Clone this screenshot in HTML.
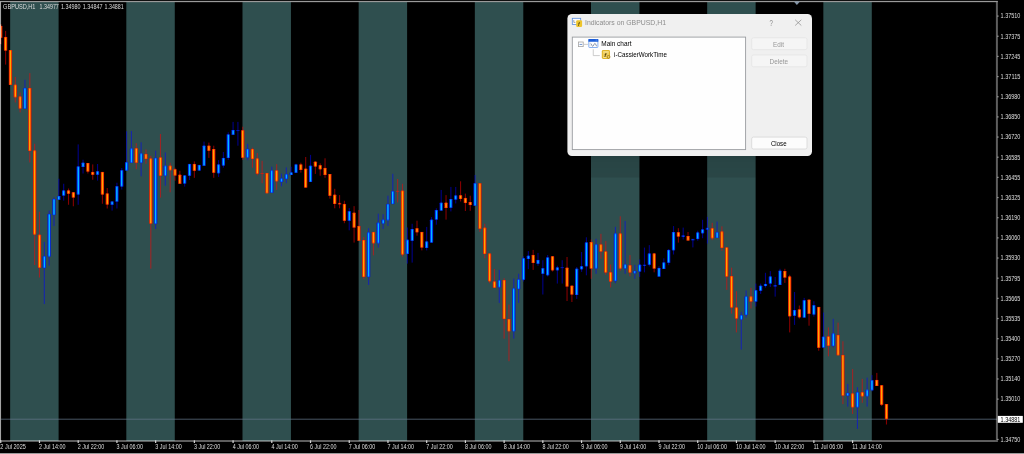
<!DOCTYPE html>
<html lang="en"><head><meta charset="utf-8"><title>GBPUSD,H1</title>
<style>html,body{margin:0;padding:0;background:#000;overflow:hidden}svg{display:block;will-change:transform}text{font-family:"Liberation Sans",sans-serif}</style></head><body>
<svg width="1024" height="454" viewBox="0 0 1024 454">
<defs>
<linearGradient id="go" x1="0" x2="1" y1="0" y2="0"><stop offset="0" stop-color="#d81000"/><stop offset="0.28" stop-color="#ff5000"/><stop offset="0.42" stop-color="#ffa800"/><stop offset="0.58" stop-color="#ffa800"/><stop offset="0.72" stop-color="#ff5000"/><stop offset="1" stop-color="#d81000"/></linearGradient>
<linearGradient id="gb" x1="0" x2="1" y1="0" y2="0"><stop offset="0" stop-color="#0010d0"/><stop offset="0.28" stop-color="#0050ff"/><stop offset="0.4" stop-color="#00bcff"/><stop offset="0.6" stop-color="#00bcff"/><stop offset="0.72" stop-color="#0050ff"/><stop offset="1" stop-color="#0010d0"/></linearGradient>
<linearGradient id="sh" x1="0" x2="0" y1="0" y2="1"><stop offset="0" stop-color="#000" stop-opacity="0.2"/><stop offset="0.25" stop-color="#000" stop-opacity="0.13"/><stop offset="0.93" stop-color="#000" stop-opacity="0.10"/><stop offset="1" stop-color="#000" stop-opacity="0"/></linearGradient>
</defs>
<rect width="1024" height="454" fill="#000"/>
<rect x="10.15" y="2" width="48.45" height="439" fill="#2f4f4f"/>
<rect x="126.32" y="2" width="48.45" height="439" fill="#2f4f4f"/>
<rect x="242.49" y="2" width="48.45" height="439" fill="#2f4f4f"/>
<rect x="358.66" y="2" width="48.45" height="439" fill="#2f4f4f"/>
<rect x="474.83" y="2" width="48.45" height="439" fill="#2f4f4f"/>
<rect x="591.00" y="2" width="48.45" height="439" fill="#2f4f4f"/>
<rect x="707.17" y="2" width="48.45" height="439" fill="#2f4f4f"/>
<rect x="823.34" y="2" width="48.45" height="439" fill="#2f4f4f"/>
<rect x="1" y="418.65" width="996" height="1.15" fill="#66788a" opacity="0.62"/>
<rect x="0.21" y="24.00" width="1.1" height="20.60" fill="#ff0000" opacity="0.52"/>
<rect x="-0.89" y="25.90" width="3.3" height="11.90" rx="0.5" fill="url(#go)"/>
<rect x="-0.74" y="25.90" width="3.0" height="0.6" fill="#f01800" opacity="0.7"/>
<rect x="-0.74" y="37.20" width="3.0" height="0.6" fill="#f01800" opacity="0.7"/>
<rect x="5.05" y="30.90" width="1.1" height="33.70" fill="#ff0000" opacity="0.52"/>
<rect x="3.95" y="36.90" width="3.3" height="13.70" rx="0.5" fill="url(#go)"/>
<rect x="4.10" y="36.90" width="3.0" height="0.6" fill="#f01800" opacity="0.7"/>
<rect x="4.10" y="50.00" width="3.0" height="0.6" fill="#f01800" opacity="0.7"/>
<rect x="9.89" y="50.00" width="1.1" height="35.00" fill="#ff0000" opacity="0.52"/>
<rect x="8.79" y="50.00" width="3.3" height="35.00" rx="0.5" fill="url(#go)"/>
<rect x="8.94" y="50.00" width="3.0" height="0.6" fill="#f01800" opacity="0.7"/>
<rect x="8.94" y="84.40" width="3.0" height="0.6" fill="#f01800" opacity="0.7"/>
<rect x="14.73" y="76.90" width="1.1" height="25.60" fill="#ff0000" opacity="0.52"/>
<rect x="13.63" y="84.75" width="3.3" height="12.50" rx="0.5" fill="url(#go)"/>
<rect x="13.78" y="84.75" width="3.0" height="0.6" fill="#f01800" opacity="0.7"/>
<rect x="13.78" y="96.65" width="3.0" height="0.6" fill="#f01800" opacity="0.7"/>
<rect x="19.57" y="92.50" width="1.1" height="19.90" fill="#ff0000" opacity="0.52"/>
<rect x="18.47" y="96.60" width="3.3" height="11.90" rx="0.5" fill="url(#go)"/>
<rect x="18.62" y="96.60" width="3.0" height="0.6" fill="#f01800" opacity="0.7"/>
<rect x="18.62" y="107.90" width="3.0" height="0.6" fill="#f01800" opacity="0.7"/>
<rect x="24.41" y="79.75" width="1.1" height="29.00" fill="#0000ff" opacity="0.52"/>
<rect x="23.31" y="88.10" width="3.3" height="20.65" rx="0.5" fill="url(#gb)"/>
<rect x="23.46" y="88.10" width="3.0" height="0.6" fill="#0020f0" opacity="0.7"/>
<rect x="23.46" y="108.15" width="3.0" height="0.6" fill="#0020f0" opacity="0.7"/>
<rect x="29.25" y="73.10" width="1.1" height="89.40" fill="#ff0000" opacity="0.52"/>
<rect x="28.15" y="88.10" width="3.3" height="62.90" rx="0.5" fill="url(#go)"/>
<rect x="28.30" y="88.10" width="3.0" height="0.6" fill="#f01800" opacity="0.7"/>
<rect x="28.30" y="150.40" width="3.0" height="0.6" fill="#f01800" opacity="0.7"/>
<rect x="34.09" y="143.75" width="1.1" height="121.25" fill="#ff0000" opacity="0.52"/>
<rect x="32.99" y="150.60" width="3.3" height="83.80" rx="0.5" fill="url(#go)"/>
<rect x="33.14" y="150.60" width="3.0" height="0.6" fill="#f01800" opacity="0.7"/>
<rect x="33.14" y="233.80" width="3.0" height="0.6" fill="#f01800" opacity="0.7"/>
<rect x="38.93" y="211.70" width="1.1" height="65.80" fill="#ff0000" opacity="0.52"/>
<rect x="37.83" y="234.75" width="3.3" height="33.00" rx="0.5" fill="url(#go)"/>
<rect x="37.98" y="234.75" width="3.0" height="0.6" fill="#f01800" opacity="0.7"/>
<rect x="37.98" y="267.15" width="3.0" height="0.6" fill="#f01800" opacity="0.7"/>
<rect x="43.77" y="241.90" width="1.1" height="62.10" fill="#0000ff" opacity="0.52"/>
<rect x="42.67" y="256.25" width="3.3" height="11.85" rx="0.5" fill="url(#gb)"/>
<rect x="42.82" y="256.25" width="3.0" height="0.6" fill="#0020f0" opacity="0.7"/>
<rect x="42.82" y="267.50" width="3.0" height="0.6" fill="#0020f0" opacity="0.7"/>
<rect x="48.61" y="210.60" width="1.1" height="55.00" fill="#0000ff" opacity="0.52"/>
<rect x="47.51" y="214.00" width="3.3" height="42.40" rx="0.5" fill="url(#gb)"/>
<rect x="47.66" y="214.00" width="3.0" height="0.6" fill="#0020f0" opacity="0.7"/>
<rect x="47.66" y="255.80" width="3.0" height="0.6" fill="#0020f0" opacity="0.7"/>
<rect x="53.45" y="197.25" width="1.1" height="28.75" fill="#0000ff" opacity="0.52"/>
<rect x="52.35" y="199.00" width="3.3" height="16.10" rx="0.5" fill="url(#gb)"/>
<rect x="52.50" y="199.00" width="3.0" height="0.6" fill="#0020f0" opacity="0.7"/>
<rect x="52.50" y="214.50" width="3.0" height="0.6" fill="#0020f0" opacity="0.7"/>
<rect x="58.29" y="178.75" width="1.1" height="21.00" fill="#0000ff" opacity="0.52"/>
<rect x="57.19" y="196.00" width="3.3" height="3.75" rx="0.5" fill="url(#gb)"/>
<rect x="57.34" y="196.00" width="3.0" height="0.6" fill="#0020f0" opacity="0.7"/>
<rect x="57.34" y="199.15" width="3.0" height="0.6" fill="#0020f0" opacity="0.7"/>
<rect x="63.13" y="183.75" width="1.1" height="16.85" fill="#0000ff" opacity="0.52"/>
<rect x="62.03" y="190.60" width="3.3" height="5.00" rx="0.5" fill="url(#gb)"/>
<rect x="62.18" y="190.60" width="3.0" height="0.6" fill="#0020f0" opacity="0.7"/>
<rect x="62.18" y="195.00" width="3.0" height="0.6" fill="#0020f0" opacity="0.7"/>
<rect x="67.97" y="188.50" width="1.1" height="16.25" fill="#ff0000" opacity="0.52"/>
<rect x="66.87" y="190.60" width="3.3" height="3.15" rx="0.5" fill="url(#go)"/>
<rect x="67.02" y="190.60" width="3.0" height="0.6" fill="#f01800" opacity="0.7"/>
<rect x="67.02" y="193.15" width="3.0" height="0.6" fill="#f01800" opacity="0.7"/>
<rect x="72.81" y="192.00" width="1.1" height="14.25" fill="#ff0000" opacity="0.52"/>
<rect x="71.71" y="192.25" width="3.3" height="5.25" rx="0.5" fill="url(#go)"/>
<rect x="71.86" y="192.25" width="3.0" height="0.6" fill="#f01800" opacity="0.7"/>
<rect x="71.86" y="196.90" width="3.0" height="0.6" fill="#f01800" opacity="0.7"/>
<rect x="77.65" y="144.40" width="1.1" height="60.35" fill="#0000ff" opacity="0.52"/>
<rect x="76.55" y="166.50" width="3.3" height="27.90" rx="0.5" fill="url(#gb)"/>
<rect x="76.70" y="166.50" width="3.0" height="0.6" fill="#0020f0" opacity="0.7"/>
<rect x="76.70" y="193.80" width="3.0" height="0.6" fill="#0020f0" opacity="0.7"/>
<rect x="82.49" y="159.75" width="1.1" height="13.75" fill="#0000ff" opacity="0.52"/>
<rect x="81.39" y="162.75" width="3.3" height="4.15" rx="0.5" fill="url(#gb)"/>
<rect x="81.54" y="162.75" width="3.0" height="0.6" fill="#0020f0" opacity="0.7"/>
<rect x="81.54" y="166.30" width="3.0" height="0.6" fill="#0020f0" opacity="0.7"/>
<rect x="87.33" y="163.00" width="1.1" height="10.50" fill="#ff0000" opacity="0.52"/>
<rect x="86.23" y="163.00" width="3.3" height="8.50" rx="0.5" fill="url(#go)"/>
<rect x="86.38" y="163.00" width="3.0" height="0.6" fill="#f01800" opacity="0.7"/>
<rect x="86.38" y="170.90" width="3.0" height="0.6" fill="#f01800" opacity="0.7"/>
<rect x="92.17" y="164.40" width="1.1" height="15.35" fill="#ff0000" opacity="0.52"/>
<rect x="91.07" y="171.90" width="3.3" height="2.85" rx="0.5" fill="url(#go)"/>
<rect x="91.22" y="171.90" width="3.0" height="0.6" fill="#f01800" opacity="0.7"/>
<rect x="91.22" y="174.15" width="3.0" height="0.6" fill="#f01800" opacity="0.7"/>
<rect x="97.01" y="164.00" width="1.1" height="16.60" fill="#0000ff" opacity="0.52"/>
<rect x="95.91" y="171.25" width="3.3" height="3.50" rx="0.5" fill="url(#gb)"/>
<rect x="96.06" y="171.25" width="3.0" height="0.6" fill="#0020f0" opacity="0.7"/>
<rect x="96.06" y="174.15" width="3.0" height="0.6" fill="#0020f0" opacity="0.7"/>
<rect x="101.85" y="171.90" width="1.1" height="31.85" fill="#ff0000" opacity="0.52"/>
<rect x="100.75" y="171.90" width="3.3" height="22.50" rx="0.5" fill="url(#go)"/>
<rect x="100.90" y="171.90" width="3.0" height="0.6" fill="#f01800" opacity="0.7"/>
<rect x="100.90" y="193.80" width="3.0" height="0.6" fill="#f01800" opacity="0.7"/>
<rect x="106.69" y="188.00" width="1.1" height="20.50" fill="#ff0000" opacity="0.52"/>
<rect x="105.59" y="193.50" width="3.3" height="10.90" rx="0.5" fill="url(#go)"/>
<rect x="105.74" y="193.50" width="3.0" height="0.6" fill="#f01800" opacity="0.7"/>
<rect x="105.74" y="203.80" width="3.0" height="0.6" fill="#f01800" opacity="0.7"/>
<rect x="111.53" y="201.60" width="1.1" height="9.00" fill="#0000ff" opacity="0.52"/>
<rect x="110.43" y="201.60" width="3.3" height="3.15" rx="0.5" fill="url(#gb)"/>
<rect x="110.58" y="201.60" width="3.0" height="0.6" fill="#0020f0" opacity="0.7"/>
<rect x="110.58" y="204.15" width="3.0" height="0.6" fill="#0020f0" opacity="0.7"/>
<rect x="116.37" y="182.75" width="1.1" height="25.75" fill="#0000ff" opacity="0.52"/>
<rect x="115.27" y="186.25" width="3.3" height="15.35" rx="0.5" fill="url(#gb)"/>
<rect x="115.42" y="186.25" width="3.0" height="0.6" fill="#0020f0" opacity="0.7"/>
<rect x="115.42" y="201.00" width="3.0" height="0.6" fill="#0020f0" opacity="0.7"/>
<rect x="121.21" y="168.00" width="1.1" height="21.50" fill="#0000ff" opacity="0.52"/>
<rect x="120.11" y="170.25" width="3.3" height="16.15" rx="0.5" fill="url(#gb)"/>
<rect x="120.26" y="170.25" width="3.0" height="0.6" fill="#0020f0" opacity="0.7"/>
<rect x="120.26" y="185.80" width="3.0" height="0.6" fill="#0020f0" opacity="0.7"/>
<rect x="126.05" y="131.30" width="1.1" height="39.10" fill="#0000ff" opacity="0.52"/>
<rect x="124.95" y="162.20" width="3.3" height="8.20" rx="0.5" fill="url(#gb)"/>
<rect x="125.10" y="162.20" width="3.0" height="0.6" fill="#0020f0" opacity="0.7"/>
<rect x="125.10" y="169.80" width="3.0" height="0.6" fill="#0020f0" opacity="0.7"/>
<rect x="130.89" y="131.00" width="1.1" height="31.70" fill="#0000ff" opacity="0.52"/>
<rect x="129.79" y="148.60" width="3.3" height="14.10" rx="0.5" fill="url(#gb)"/>
<rect x="129.94" y="148.60" width="3.0" height="0.6" fill="#0020f0" opacity="0.7"/>
<rect x="129.94" y="162.10" width="3.0" height="0.6" fill="#0020f0" opacity="0.7"/>
<rect x="135.73" y="143.20" width="1.1" height="26.00" fill="#ff0000" opacity="0.52"/>
<rect x="134.63" y="148.20" width="3.3" height="14.50" rx="0.5" fill="url(#go)"/>
<rect x="134.78" y="148.20" width="3.0" height="0.6" fill="#f01800" opacity="0.7"/>
<rect x="134.78" y="162.10" width="3.0" height="0.6" fill="#f01800" opacity="0.7"/>
<rect x="140.57" y="142.30" width="1.1" height="34.00" fill="#0000ff" opacity="0.52"/>
<rect x="139.47" y="153.60" width="3.3" height="9.10" rx="0.5" fill="url(#gb)"/>
<rect x="139.62" y="153.60" width="3.0" height="0.6" fill="#0020f0" opacity="0.7"/>
<rect x="139.62" y="162.10" width="3.0" height="0.6" fill="#0020f0" opacity="0.7"/>
<rect x="145.41" y="149.50" width="1.1" height="14.20" fill="#ff0000" opacity="0.52"/>
<rect x="144.31" y="153.90" width="3.3" height="5.20" rx="0.5" fill="url(#go)"/>
<rect x="144.46" y="153.90" width="3.0" height="0.6" fill="#f01800" opacity="0.7"/>
<rect x="144.46" y="158.50" width="3.0" height="0.6" fill="#f01800" opacity="0.7"/>
<rect x="150.25" y="155.80" width="1.1" height="112.90" fill="#ff0000" opacity="0.52"/>
<rect x="149.15" y="158.60" width="3.3" height="65.00" rx="0.5" fill="url(#go)"/>
<rect x="149.30" y="158.60" width="3.0" height="0.6" fill="#f01800" opacity="0.7"/>
<rect x="149.30" y="223.00" width="3.0" height="0.6" fill="#f01800" opacity="0.7"/>
<rect x="155.09" y="150.70" width="1.1" height="78.30" fill="#0000ff" opacity="0.52"/>
<rect x="153.99" y="157.90" width="3.3" height="65.90" rx="0.5" fill="url(#gb)"/>
<rect x="154.14" y="157.90" width="3.0" height="0.6" fill="#0020f0" opacity="0.7"/>
<rect x="154.14" y="223.20" width="3.0" height="0.6" fill="#0020f0" opacity="0.7"/>
<rect x="159.93" y="134.00" width="1.1" height="63.60" fill="#ff0000" opacity="0.52"/>
<rect x="158.83" y="157.40" width="3.3" height="18.30" rx="0.5" fill="url(#go)"/>
<rect x="158.98" y="157.40" width="3.0" height="0.6" fill="#f01800" opacity="0.7"/>
<rect x="158.98" y="175.10" width="3.0" height="0.6" fill="#f01800" opacity="0.7"/>
<rect x="164.77" y="152.40" width="1.1" height="33.30" fill="#0000ff" opacity="0.52"/>
<rect x="163.67" y="165.80" width="3.3" height="10.00" rx="0.5" fill="url(#gb)"/>
<rect x="163.82" y="165.80" width="3.0" height="0.6" fill="#0020f0" opacity="0.7"/>
<rect x="163.82" y="175.20" width="3.0" height="0.6" fill="#0020f0" opacity="0.7"/>
<rect x="169.61" y="162.70" width="1.1" height="29.60" fill="#ff0000" opacity="0.52"/>
<rect x="168.51" y="165.80" width="3.3" height="4.40" rx="0.5" fill="url(#go)"/>
<rect x="168.66" y="165.80" width="3.0" height="0.6" fill="#f01800" opacity="0.7"/>
<rect x="168.66" y="169.60" width="3.0" height="0.6" fill="#f01800" opacity="0.7"/>
<rect x="174.45" y="167.70" width="1.1" height="13.00" fill="#ff0000" opacity="0.52"/>
<rect x="173.35" y="169.20" width="3.3" height="6.20" rx="0.5" fill="url(#go)"/>
<rect x="173.50" y="169.20" width="3.0" height="0.6" fill="#f01800" opacity="0.7"/>
<rect x="173.50" y="174.80" width="3.0" height="0.6" fill="#f01800" opacity="0.7"/>
<rect x="179.29" y="170.80" width="1.1" height="13.00" fill="#ff0000" opacity="0.52"/>
<rect x="178.19" y="174.80" width="3.3" height="9.00" rx="0.5" fill="url(#go)"/>
<rect x="178.34" y="174.80" width="3.0" height="0.6" fill="#f01800" opacity="0.7"/>
<rect x="178.34" y="183.20" width="3.0" height="0.6" fill="#f01800" opacity="0.7"/>
<rect x="184.13" y="175.20" width="1.1" height="11.40" fill="#0000ff" opacity="0.52"/>
<rect x="183.03" y="175.40" width="3.3" height="8.10" rx="0.5" fill="url(#gb)"/>
<rect x="183.18" y="175.40" width="3.0" height="0.6" fill="#0020f0" opacity="0.7"/>
<rect x="183.18" y="182.90" width="3.0" height="0.6" fill="#0020f0" opacity="0.7"/>
<rect x="188.97" y="163.90" width="1.1" height="16.10" fill="#0000ff" opacity="0.52"/>
<rect x="187.87" y="163.90" width="3.3" height="11.80" rx="0.5" fill="url(#gb)"/>
<rect x="188.02" y="163.90" width="3.0" height="0.6" fill="#0020f0" opacity="0.7"/>
<rect x="188.02" y="175.10" width="3.0" height="0.6" fill="#0020f0" opacity="0.7"/>
<rect x="193.81" y="161.40" width="1.1" height="16.40" fill="#ff0000" opacity="0.52"/>
<rect x="192.71" y="163.90" width="3.3" height="6.90" rx="0.5" fill="url(#go)"/>
<rect x="192.86" y="163.90" width="3.0" height="0.6" fill="#f01800" opacity="0.7"/>
<rect x="192.86" y="170.20" width="3.0" height="0.6" fill="#f01800" opacity="0.7"/>
<rect x="198.65" y="164.90" width="1.1" height="5.50" fill="#0000ff" opacity="0.52"/>
<rect x="197.55" y="164.90" width="3.3" height="5.50" rx="0.5" fill="url(#gb)"/>
<rect x="197.70" y="164.90" width="3.0" height="0.6" fill="#0020f0" opacity="0.7"/>
<rect x="197.70" y="169.80" width="3.0" height="0.6" fill="#0020f0" opacity="0.7"/>
<rect x="203.49" y="141.60" width="1.1" height="24.20" fill="#0000ff" opacity="0.52"/>
<rect x="202.39" y="145.70" width="3.3" height="20.10" rx="0.5" fill="url(#gb)"/>
<rect x="202.54" y="145.70" width="3.0" height="0.6" fill="#0020f0" opacity="0.7"/>
<rect x="202.54" y="165.20" width="3.0" height="0.6" fill="#0020f0" opacity="0.7"/>
<rect x="208.33" y="142.60" width="1.1" height="15.30" fill="#ff0000" opacity="0.52"/>
<rect x="207.23" y="145.70" width="3.3" height="5.00" rx="0.5" fill="url(#go)"/>
<rect x="207.38" y="145.70" width="3.0" height="0.6" fill="#f01800" opacity="0.7"/>
<rect x="207.38" y="150.10" width="3.0" height="0.6" fill="#f01800" opacity="0.7"/>
<rect x="213.17" y="145.70" width="1.1" height="32.10" fill="#ff0000" opacity="0.52"/>
<rect x="212.07" y="149.10" width="3.3" height="23.75" rx="0.5" fill="url(#go)"/>
<rect x="212.22" y="149.10" width="3.0" height="0.6" fill="#f01800" opacity="0.7"/>
<rect x="212.22" y="172.25" width="3.0" height="0.6" fill="#f01800" opacity="0.7"/>
<rect x="218.01" y="160.10" width="1.1" height="16.80" fill="#0000ff" opacity="0.52"/>
<rect x="216.91" y="164.50" width="3.3" height="8.70" rx="0.5" fill="url(#gb)"/>
<rect x="217.06" y="164.50" width="3.0" height="0.6" fill="#0020f0" opacity="0.7"/>
<rect x="217.06" y="172.60" width="3.0" height="0.6" fill="#0020f0" opacity="0.7"/>
<rect x="222.85" y="152.00" width="1.1" height="15.70" fill="#0000ff" opacity="0.52"/>
<rect x="221.75" y="157.90" width="3.3" height="7.50" rx="0.5" fill="url(#gb)"/>
<rect x="221.90" y="157.90" width="3.0" height="0.6" fill="#0020f0" opacity="0.7"/>
<rect x="221.90" y="164.80" width="3.0" height="0.6" fill="#0020f0" opacity="0.7"/>
<rect x="227.69" y="132.30" width="1.1" height="27.60" fill="#0000ff" opacity="0.52"/>
<rect x="226.59" y="134.40" width="3.3" height="23.50" rx="0.5" fill="url(#gb)"/>
<rect x="226.74" y="134.40" width="3.0" height="0.6" fill="#0020f0" opacity="0.7"/>
<rect x="226.74" y="157.30" width="3.0" height="0.6" fill="#0020f0" opacity="0.7"/>
<rect x="232.53" y="121.90" width="1.1" height="12.90" fill="#0000ff" opacity="0.52"/>
<rect x="231.43" y="130.00" width="3.3" height="4.80" rx="0.5" fill="url(#gb)"/>
<rect x="231.58" y="130.00" width="3.0" height="0.6" fill="#0020f0" opacity="0.7"/>
<rect x="231.58" y="134.20" width="3.0" height="0.6" fill="#0020f0" opacity="0.7"/>
<rect x="237.37" y="121.90" width="1.1" height="23.80" fill="#0000ff" opacity="0.52"/>
<rect x="236.27" y="130.15" width="3.3" height="0.9" fill="#0020f0" opacity="0.75"/>
<rect x="242.21" y="126.70" width="1.1" height="33.20" fill="#ff0000" opacity="0.52"/>
<rect x="241.11" y="130.20" width="3.3" height="27.55" rx="0.5" fill="url(#go)"/>
<rect x="241.26" y="130.20" width="3.0" height="0.6" fill="#f01800" opacity="0.7"/>
<rect x="241.26" y="157.15" width="3.0" height="0.6" fill="#f01800" opacity="0.7"/>
<rect x="247.05" y="143.80" width="1.1" height="16.40" fill="#0000ff" opacity="0.52"/>
<rect x="245.95" y="148.90" width="3.3" height="8.60" rx="0.5" fill="url(#gb)"/>
<rect x="246.10" y="148.90" width="3.0" height="0.6" fill="#0020f0" opacity="0.7"/>
<rect x="246.10" y="156.90" width="3.0" height="0.6" fill="#0020f0" opacity="0.7"/>
<rect x="251.89" y="147.60" width="1.1" height="20.10" fill="#ff0000" opacity="0.52"/>
<rect x="250.79" y="148.90" width="3.3" height="10.00" rx="0.5" fill="url(#go)"/>
<rect x="250.94" y="148.90" width="3.0" height="0.6" fill="#f01800" opacity="0.7"/>
<rect x="250.94" y="158.30" width="3.0" height="0.6" fill="#f01800" opacity="0.7"/>
<rect x="256.73" y="152.90" width="1.1" height="22.40" fill="#ff0000" opacity="0.52"/>
<rect x="255.63" y="158.60" width="3.3" height="15.15" rx="0.5" fill="url(#go)"/>
<rect x="255.78" y="158.60" width="3.0" height="0.6" fill="#f01800" opacity="0.7"/>
<rect x="255.78" y="173.15" width="3.0" height="0.6" fill="#f01800" opacity="0.7"/>
<rect x="261.57" y="160.80" width="1.1" height="22.40" fill="#ff0000" opacity="0.52"/>
<rect x="260.47" y="173.15" width="3.3" height="0.9" fill="#f01800" opacity="0.75"/>
<rect x="266.41" y="172.90" width="1.1" height="20.30" fill="#ff0000" opacity="0.52"/>
<rect x="265.31" y="173.00" width="3.3" height="20.20" rx="0.5" fill="url(#go)"/>
<rect x="265.46" y="173.00" width="3.0" height="0.6" fill="#f01800" opacity="0.7"/>
<rect x="265.46" y="192.60" width="3.0" height="0.6" fill="#f01800" opacity="0.7"/>
<rect x="271.25" y="166.70" width="1.1" height="26.10" fill="#0000ff" opacity="0.52"/>
<rect x="270.15" y="170.50" width="3.3" height="22.30" rx="0.5" fill="url(#gb)"/>
<rect x="270.30" y="170.50" width="3.0" height="0.6" fill="#0020f0" opacity="0.7"/>
<rect x="270.30" y="192.20" width="3.0" height="0.6" fill="#0020f0" opacity="0.7"/>
<rect x="276.09" y="164.20" width="1.1" height="25.60" fill="#ff0000" opacity="0.52"/>
<rect x="274.99" y="170.40" width="3.3" height="10.90" rx="0.5" fill="url(#go)"/>
<rect x="275.14" y="170.40" width="3.0" height="0.6" fill="#f01800" opacity="0.7"/>
<rect x="275.14" y="180.70" width="3.0" height="0.6" fill="#f01800" opacity="0.7"/>
<rect x="280.93" y="173.60" width="1.1" height="12.70" fill="#0000ff" opacity="0.52"/>
<rect x="279.83" y="178.50" width="3.3" height="3.40" rx="0.5" fill="url(#gb)"/>
<rect x="279.98" y="178.50" width="3.0" height="0.6" fill="#0020f0" opacity="0.7"/>
<rect x="279.98" y="181.30" width="3.0" height="0.6" fill="#0020f0" opacity="0.7"/>
<rect x="285.77" y="167.40" width="1.1" height="15.80" fill="#0000ff" opacity="0.52"/>
<rect x="284.67" y="174.30" width="3.3" height="4.70" rx="0.5" fill="url(#gb)"/>
<rect x="284.82" y="174.30" width="3.0" height="0.6" fill="#0020f0" opacity="0.7"/>
<rect x="284.82" y="178.40" width="3.0" height="0.6" fill="#0020f0" opacity="0.7"/>
<rect x="290.61" y="166.70" width="1.1" height="8.30" fill="#0000ff" opacity="0.52"/>
<rect x="289.51" y="172.50" width="3.3" height="2.50" rx="0.5" fill="url(#gb)"/>
<rect x="289.66" y="172.50" width="3.0" height="0.6" fill="#0020f0" opacity="0.7"/>
<rect x="289.66" y="174.40" width="3.0" height="0.6" fill="#0020f0" opacity="0.7"/>
<rect x="295.45" y="163.70" width="1.1" height="9.20" fill="#0000ff" opacity="0.52"/>
<rect x="294.35" y="164.50" width="3.3" height="8.35" rx="0.5" fill="url(#gb)"/>
<rect x="294.50" y="164.50" width="3.0" height="0.6" fill="#0020f0" opacity="0.7"/>
<rect x="294.50" y="172.25" width="3.0" height="0.6" fill="#0020f0" opacity="0.7"/>
<rect x="300.29" y="162.70" width="1.1" height="9.90" fill="#ff0000" opacity="0.52"/>
<rect x="299.19" y="164.50" width="3.3" height="5.40" rx="0.5" fill="url(#go)"/>
<rect x="299.34" y="164.50" width="3.0" height="0.6" fill="#f01800" opacity="0.7"/>
<rect x="299.34" y="169.30" width="3.0" height="0.6" fill="#f01800" opacity="0.7"/>
<rect x="305.13" y="157.00" width="1.1" height="30.60" fill="#ff0000" opacity="0.52"/>
<rect x="304.03" y="168.70" width="3.3" height="18.90" rx="0.5" fill="url(#go)"/>
<rect x="304.18" y="168.70" width="3.0" height="0.6" fill="#f01800" opacity="0.7"/>
<rect x="304.18" y="187.00" width="3.0" height="0.6" fill="#f01800" opacity="0.7"/>
<rect x="309.97" y="154.90" width="1.1" height="27.00" fill="#0000ff" opacity="0.52"/>
<rect x="308.87" y="165.80" width="3.3" height="16.10" rx="0.5" fill="url(#gb)"/>
<rect x="309.02" y="165.80" width="3.0" height="0.6" fill="#0020f0" opacity="0.7"/>
<rect x="309.02" y="181.30" width="3.0" height="0.6" fill="#0020f0" opacity="0.7"/>
<rect x="314.81" y="161.40" width="1.1" height="12.50" fill="#ff0000" opacity="0.52"/>
<rect x="313.71" y="161.70" width="3.3" height="4.70" rx="0.5" fill="url(#go)"/>
<rect x="313.86" y="161.70" width="3.0" height="0.6" fill="#f01800" opacity="0.7"/>
<rect x="313.86" y="165.80" width="3.0" height="0.6" fill="#f01800" opacity="0.7"/>
<rect x="319.65" y="163.30" width="1.1" height="12.40" fill="#ff0000" opacity="0.52"/>
<rect x="318.55" y="165.20" width="3.3" height="4.00" rx="0.5" fill="url(#go)"/>
<rect x="318.70" y="165.20" width="3.0" height="0.6" fill="#f01800" opacity="0.7"/>
<rect x="318.70" y="168.60" width="3.0" height="0.6" fill="#f01800" opacity="0.7"/>
<rect x="324.49" y="158.30" width="1.1" height="19.50" fill="#ff0000" opacity="0.52"/>
<rect x="323.39" y="167.90" width="3.3" height="7.00" rx="0.5" fill="url(#go)"/>
<rect x="323.54" y="167.90" width="3.0" height="0.6" fill="#f01800" opacity="0.7"/>
<rect x="323.54" y="174.30" width="3.0" height="0.6" fill="#f01800" opacity="0.7"/>
<rect x="329.33" y="174.10" width="1.1" height="24.50" fill="#ff0000" opacity="0.52"/>
<rect x="328.23" y="174.10" width="3.3" height="21.60" rx="0.5" fill="url(#go)"/>
<rect x="328.38" y="174.10" width="3.0" height="0.6" fill="#f01800" opacity="0.7"/>
<rect x="328.38" y="195.10" width="3.0" height="0.6" fill="#f01800" opacity="0.7"/>
<rect x="334.17" y="188.80" width="1.1" height="19.50" fill="#ff0000" opacity="0.52"/>
<rect x="333.07" y="194.80" width="3.3" height="9.10" rx="0.5" fill="url(#go)"/>
<rect x="333.22" y="194.80" width="3.0" height="0.6" fill="#f01800" opacity="0.7"/>
<rect x="333.22" y="203.30" width="3.0" height="0.6" fill="#f01800" opacity="0.7"/>
<rect x="339.01" y="195.10" width="1.1" height="13.20" fill="#ff0000" opacity="0.52"/>
<rect x="337.91" y="202.90" width="3.3" height="1.60" fill="#f01800" opacity="0.8"/>
<rect x="338.66" y="203.35" width="1.8" height="0.70" fill="url(#go)" opacity="0.8"/>
<rect x="343.85" y="200.75" width="1.1" height="22.45" fill="#ff0000" opacity="0.52"/>
<rect x="342.75" y="203.90" width="3.3" height="16.80" rx="0.5" fill="url(#go)"/>
<rect x="342.90" y="203.90" width="3.0" height="0.6" fill="#f01800" opacity="0.7"/>
<rect x="342.90" y="220.10" width="3.0" height="0.6" fill="#f01800" opacity="0.7"/>
<rect x="348.69" y="208.10" width="1.1" height="22.20" fill="#0000ff" opacity="0.52"/>
<rect x="347.59" y="211.20" width="3.3" height="9.50" rx="0.5" fill="url(#gb)"/>
<rect x="347.74" y="211.20" width="3.0" height="0.6" fill="#0020f0" opacity="0.7"/>
<rect x="347.74" y="220.10" width="3.0" height="0.6" fill="#0020f0" opacity="0.7"/>
<rect x="353.53" y="206.15" width="1.1" height="36.45" fill="#ff0000" opacity="0.52"/>
<rect x="352.43" y="212.80" width="3.3" height="14.70" rx="0.5" fill="url(#go)"/>
<rect x="352.58" y="212.80" width="3.0" height="0.6" fill="#f01800" opacity="0.7"/>
<rect x="352.58" y="226.90" width="3.0" height="0.6" fill="#f01800" opacity="0.7"/>
<rect x="358.37" y="210.00" width="1.1" height="30.70" fill="#ff0000" opacity="0.52"/>
<rect x="357.27" y="225.90" width="3.3" height="14.80" rx="0.5" fill="url(#go)"/>
<rect x="357.42" y="225.90" width="3.0" height="0.6" fill="#f01800" opacity="0.7"/>
<rect x="357.42" y="240.10" width="3.0" height="0.6" fill="#f01800" opacity="0.7"/>
<rect x="363.21" y="237.00" width="1.1" height="41.90" fill="#ff0000" opacity="0.52"/>
<rect x="362.11" y="240.10" width="3.3" height="36.90" rx="0.5" fill="url(#go)"/>
<rect x="362.26" y="240.10" width="3.0" height="0.6" fill="#f01800" opacity="0.7"/>
<rect x="362.26" y="276.40" width="3.0" height="0.6" fill="#f01800" opacity="0.7"/>
<rect x="368.05" y="228.20" width="1.1" height="56.70" fill="#0000ff" opacity="0.52"/>
<rect x="366.95" y="232.60" width="3.3" height="44.40" rx="0.5" fill="url(#gb)"/>
<rect x="367.10" y="232.60" width="3.0" height="0.6" fill="#0020f0" opacity="0.7"/>
<rect x="367.10" y="276.40" width="3.0" height="0.6" fill="#0020f0" opacity="0.7"/>
<rect x="372.89" y="231.90" width="1.1" height="23.45" fill="#ff0000" opacity="0.52"/>
<rect x="371.79" y="231.90" width="3.3" height="11.30" rx="0.5" fill="url(#go)"/>
<rect x="371.94" y="231.90" width="3.0" height="0.6" fill="#f01800" opacity="0.7"/>
<rect x="371.94" y="242.60" width="3.0" height="0.6" fill="#f01800" opacity="0.7"/>
<rect x="377.73" y="213.70" width="1.1" height="33.90" fill="#0000ff" opacity="0.52"/>
<rect x="376.63" y="222.80" width="3.3" height="20.40" rx="0.5" fill="url(#gb)"/>
<rect x="376.78" y="222.80" width="3.0" height="0.6" fill="#0020f0" opacity="0.7"/>
<rect x="376.78" y="242.60" width="3.0" height="0.6" fill="#0020f0" opacity="0.7"/>
<rect x="382.57" y="214.20" width="1.1" height="14.80" fill="#0000ff" opacity="0.52"/>
<rect x="381.47" y="219.70" width="3.3" height="3.80" rx="0.5" fill="url(#gb)"/>
<rect x="381.62" y="219.70" width="3.0" height="0.6" fill="#0020f0" opacity="0.7"/>
<rect x="381.62" y="222.90" width="3.0" height="0.6" fill="#0020f0" opacity="0.7"/>
<rect x="387.41" y="195.70" width="1.1" height="30.30" fill="#0000ff" opacity="0.52"/>
<rect x="386.31" y="204.10" width="3.3" height="16.05" rx="0.5" fill="url(#gb)"/>
<rect x="386.46" y="204.10" width="3.0" height="0.6" fill="#0020f0" opacity="0.7"/>
<rect x="386.46" y="219.55" width="3.0" height="0.6" fill="#0020f0" opacity="0.7"/>
<rect x="392.25" y="173.80" width="1.1" height="30.30" fill="#0000ff" opacity="0.52"/>
<rect x="391.15" y="191.30" width="3.3" height="12.80" rx="0.5" fill="url(#gb)"/>
<rect x="391.30" y="191.30" width="3.0" height="0.6" fill="#0020f0" opacity="0.7"/>
<rect x="391.30" y="203.50" width="3.0" height="0.6" fill="#0020f0" opacity="0.7"/>
<rect x="397.09" y="179.00" width="1.1" height="23.40" fill="#ff0000" opacity="0.52"/>
<rect x="395.99" y="190.85" width="3.3" height="0.9" fill="#f01800" opacity="0.75"/>
<rect x="401.93" y="183.80" width="1.1" height="72.80" fill="#ff0000" opacity="0.52"/>
<rect x="400.83" y="190.70" width="3.3" height="63.75" rx="0.5" fill="url(#go)"/>
<rect x="400.98" y="190.70" width="3.0" height="0.6" fill="#f01800" opacity="0.7"/>
<rect x="400.98" y="253.85" width="3.0" height="0.6" fill="#f01800" opacity="0.7"/>
<rect x="406.77" y="227.50" width="1.1" height="36.10" fill="#0000ff" opacity="0.52"/>
<rect x="405.67" y="239.80" width="3.3" height="14.20" rx="0.5" fill="url(#gb)"/>
<rect x="405.82" y="239.80" width="3.0" height="0.6" fill="#0020f0" opacity="0.7"/>
<rect x="405.82" y="253.40" width="3.0" height="0.6" fill="#0020f0" opacity="0.7"/>
<rect x="411.61" y="223.80" width="1.1" height="38.80" fill="#0000ff" opacity="0.52"/>
<rect x="410.51" y="229.00" width="3.3" height="11.70" rx="0.5" fill="url(#gb)"/>
<rect x="410.66" y="229.00" width="3.0" height="0.6" fill="#0020f0" opacity="0.7"/>
<rect x="410.66" y="240.10" width="3.0" height="0.6" fill="#0020f0" opacity="0.7"/>
<rect x="416.45" y="220.70" width="1.1" height="15.00" fill="#ff0000" opacity="0.52"/>
<rect x="415.35" y="228.20" width="3.3" height="4.10" rx="0.5" fill="url(#go)"/>
<rect x="415.50" y="228.20" width="3.0" height="0.6" fill="#f01800" opacity="0.7"/>
<rect x="415.50" y="231.70" width="3.0" height="0.6" fill="#f01800" opacity="0.7"/>
<rect x="421.29" y="231.90" width="1.1" height="18.50" fill="#ff0000" opacity="0.52"/>
<rect x="420.19" y="231.90" width="3.3" height="15.60" rx="0.5" fill="url(#go)"/>
<rect x="420.34" y="231.90" width="3.0" height="0.6" fill="#f01800" opacity="0.7"/>
<rect x="420.34" y="246.90" width="3.0" height="0.6" fill="#f01800" opacity="0.7"/>
<rect x="426.13" y="226.90" width="1.1" height="23.50" fill="#0000ff" opacity="0.52"/>
<rect x="425.03" y="241.60" width="3.3" height="6.30" rx="0.5" fill="url(#gb)"/>
<rect x="425.18" y="241.60" width="3.0" height="0.6" fill="#0020f0" opacity="0.7"/>
<rect x="425.18" y="247.30" width="3.0" height="0.6" fill="#0020f0" opacity="0.7"/>
<rect x="430.97" y="217.10" width="1.1" height="25.50" fill="#0000ff" opacity="0.52"/>
<rect x="429.87" y="219.75" width="3.3" height="22.85" rx="0.5" fill="url(#gb)"/>
<rect x="430.02" y="219.75" width="3.0" height="0.6" fill="#0020f0" opacity="0.7"/>
<rect x="430.02" y="242.00" width="3.0" height="0.6" fill="#0020f0" opacity="0.7"/>
<rect x="435.81" y="208.30" width="1.1" height="16.40" fill="#0000ff" opacity="0.52"/>
<rect x="434.71" y="210.00" width="3.3" height="9.60" rx="0.5" fill="url(#gb)"/>
<rect x="434.86" y="210.00" width="3.0" height="0.6" fill="#0020f0" opacity="0.7"/>
<rect x="434.86" y="219.00" width="3.0" height="0.6" fill="#0020f0" opacity="0.7"/>
<rect x="440.65" y="189.95" width="1.1" height="20.65" fill="#0000ff" opacity="0.52"/>
<rect x="439.55" y="202.75" width="3.3" height="7.85" rx="0.5" fill="url(#gb)"/>
<rect x="439.70" y="202.75" width="3.0" height="0.6" fill="#0020f0" opacity="0.7"/>
<rect x="439.70" y="210.00" width="3.0" height="0.6" fill="#0020f0" opacity="0.7"/>
<rect x="445.49" y="195.10" width="1.1" height="24.50" fill="#ff0000" opacity="0.52"/>
<rect x="444.39" y="202.75" width="3.3" height="5.15" rx="0.5" fill="url(#go)"/>
<rect x="444.54" y="202.75" width="3.0" height="0.6" fill="#f01800" opacity="0.7"/>
<rect x="444.54" y="207.30" width="3.0" height="0.6" fill="#f01800" opacity="0.7"/>
<rect x="450.33" y="186.95" width="1.1" height="24.45" fill="#0000ff" opacity="0.52"/>
<rect x="449.23" y="199.00" width="3.3" height="8.80" rx="0.5" fill="url(#gb)"/>
<rect x="449.38" y="199.00" width="3.0" height="0.6" fill="#0020f0" opacity="0.7"/>
<rect x="449.38" y="207.20" width="3.0" height="0.6" fill="#0020f0" opacity="0.7"/>
<rect x="455.17" y="186.95" width="1.1" height="16.50" fill="#0000ff" opacity="0.52"/>
<rect x="454.07" y="195.55" width="3.3" height="3.95" rx="0.5" fill="url(#gb)"/>
<rect x="454.22" y="195.55" width="3.0" height="0.6" fill="#0020f0" opacity="0.7"/>
<rect x="454.22" y="198.90" width="3.0" height="0.6" fill="#0020f0" opacity="0.7"/>
<rect x="460.01" y="181.30" width="1.1" height="20.20" fill="#ff0000" opacity="0.52"/>
<rect x="458.91" y="195.35" width="3.3" height="3.65" rx="0.5" fill="url(#go)"/>
<rect x="459.06" y="195.35" width="3.0" height="0.6" fill="#f01800" opacity="0.7"/>
<rect x="459.06" y="198.40" width="3.0" height="0.6" fill="#f01800" opacity="0.7"/>
<rect x="464.85" y="193.60" width="1.1" height="17.40" fill="#ff0000" opacity="0.52"/>
<rect x="463.75" y="197.90" width="3.3" height="5.15" rx="0.5" fill="url(#go)"/>
<rect x="463.90" y="197.90" width="3.0" height="0.6" fill="#f01800" opacity="0.7"/>
<rect x="463.90" y="202.45" width="3.0" height="0.6" fill="#f01800" opacity="0.7"/>
<rect x="469.69" y="195.70" width="1.1" height="15.10" fill="#ff0000" opacity="0.52"/>
<rect x="468.59" y="202.00" width="3.3" height="3.10" rx="0.5" fill="url(#go)"/>
<rect x="468.74" y="202.00" width="3.0" height="0.6" fill="#f01800" opacity="0.7"/>
<rect x="468.74" y="204.50" width="3.0" height="0.6" fill="#f01800" opacity="0.7"/>
<rect x="474.53" y="175.00" width="1.1" height="30.80" fill="#0000ff" opacity="0.52"/>
<rect x="473.43" y="183.20" width="3.3" height="22.60" rx="0.5" fill="url(#gb)"/>
<rect x="473.58" y="183.20" width="3.0" height="0.6" fill="#0020f0" opacity="0.7"/>
<rect x="473.58" y="205.20" width="3.0" height="0.6" fill="#0020f0" opacity="0.7"/>
<rect x="479.37" y="183.20" width="1.1" height="48.70" fill="#ff0000" opacity="0.52"/>
<rect x="478.27" y="183.20" width="3.3" height="45.60" rx="0.5" fill="url(#go)"/>
<rect x="478.42" y="183.20" width="3.0" height="0.6" fill="#f01800" opacity="0.7"/>
<rect x="478.42" y="228.20" width="3.0" height="0.6" fill="#f01800" opacity="0.7"/>
<rect x="484.21" y="223.75" width="1.1" height="34.55" fill="#ff0000" opacity="0.52"/>
<rect x="483.11" y="227.80" width="3.3" height="26.10" rx="0.5" fill="url(#go)"/>
<rect x="483.26" y="227.80" width="3.0" height="0.6" fill="#f01800" opacity="0.7"/>
<rect x="483.26" y="253.30" width="3.0" height="0.6" fill="#f01800" opacity="0.7"/>
<rect x="489.05" y="253.60" width="1.1" height="29.60" fill="#ff0000" opacity="0.52"/>
<rect x="487.95" y="253.60" width="3.3" height="27.70" rx="0.5" fill="url(#go)"/>
<rect x="488.10" y="253.60" width="3.0" height="0.6" fill="#f01800" opacity="0.7"/>
<rect x="488.10" y="280.70" width="3.0" height="0.6" fill="#f01800" opacity="0.7"/>
<rect x="493.89" y="268.90" width="1.1" height="18.90" fill="#ff0000" opacity="0.52"/>
<rect x="492.79" y="281.50" width="3.3" height="6.30" rx="0.5" fill="url(#go)"/>
<rect x="492.94" y="281.50" width="3.0" height="0.6" fill="#f01800" opacity="0.7"/>
<rect x="492.94" y="287.20" width="3.0" height="0.6" fill="#f01800" opacity="0.7"/>
<rect x="498.73" y="269.90" width="1.1" height="33.00" fill="#0000ff" opacity="0.52"/>
<rect x="497.63" y="280.30" width="3.3" height="7.00" rx="0.5" fill="url(#gb)"/>
<rect x="497.78" y="280.30" width="3.0" height="0.6" fill="#0020f0" opacity="0.7"/>
<rect x="497.78" y="286.70" width="3.0" height="0.6" fill="#0020f0" opacity="0.7"/>
<rect x="503.57" y="278.20" width="1.1" height="60.40" fill="#ff0000" opacity="0.52"/>
<rect x="502.47" y="280.00" width="3.3" height="39.10" rx="0.5" fill="url(#go)"/>
<rect x="502.62" y="280.00" width="3.0" height="0.6" fill="#f01800" opacity="0.7"/>
<rect x="502.62" y="318.50" width="3.0" height="0.6" fill="#f01800" opacity="0.7"/>
<rect x="508.41" y="304.50" width="1.1" height="56.70" fill="#ff0000" opacity="0.52"/>
<rect x="507.31" y="319.10" width="3.3" height="12.20" rx="0.5" fill="url(#go)"/>
<rect x="507.46" y="319.10" width="3.0" height="0.6" fill="#f01800" opacity="0.7"/>
<rect x="507.46" y="330.70" width="3.0" height="0.6" fill="#f01800" opacity="0.7"/>
<rect x="513.25" y="278.50" width="1.1" height="60.10" fill="#0000ff" opacity="0.52"/>
<rect x="512.15" y="288.60" width="3.3" height="42.70" rx="0.5" fill="url(#gb)"/>
<rect x="512.30" y="288.60" width="3.0" height="0.6" fill="#0020f0" opacity="0.7"/>
<rect x="512.30" y="330.70" width="3.0" height="0.6" fill="#0020f0" opacity="0.7"/>
<rect x="518.09" y="273.75" width="1.1" height="29.15" fill="#0000ff" opacity="0.52"/>
<rect x="516.99" y="279.40" width="3.3" height="9.70" rx="0.5" fill="url(#gb)"/>
<rect x="517.14" y="279.40" width="3.0" height="0.6" fill="#0020f0" opacity="0.7"/>
<rect x="517.14" y="288.50" width="3.0" height="0.6" fill="#0020f0" opacity="0.7"/>
<rect x="522.93" y="256.40" width="1.1" height="25.10" fill="#0000ff" opacity="0.52"/>
<rect x="521.83" y="258.30" width="3.3" height="21.50" rx="0.5" fill="url(#gb)"/>
<rect x="521.98" y="258.30" width="3.0" height="0.6" fill="#0020f0" opacity="0.7"/>
<rect x="521.98" y="279.20" width="3.0" height="0.6" fill="#0020f0" opacity="0.7"/>
<rect x="527.77" y="251.10" width="1.1" height="18.10" fill="#0000ff" opacity="0.52"/>
<rect x="526.67" y="255.80" width="3.3" height="3.10" rx="0.5" fill="url(#gb)"/>
<rect x="526.82" y="255.80" width="3.0" height="0.6" fill="#0020f0" opacity="0.7"/>
<rect x="526.82" y="258.30" width="3.0" height="0.6" fill="#0020f0" opacity="0.7"/>
<rect x="532.61" y="249.90" width="1.1" height="20.00" fill="#ff0000" opacity="0.52"/>
<rect x="531.51" y="254.90" width="3.3" height="8.00" rx="0.5" fill="url(#go)"/>
<rect x="531.66" y="254.90" width="3.0" height="0.6" fill="#f01800" opacity="0.7"/>
<rect x="531.66" y="262.30" width="3.0" height="0.6" fill="#f01800" opacity="0.7"/>
<rect x="537.45" y="252.90" width="1.1" height="12.90" fill="#0000ff" opacity="0.52"/>
<rect x="536.35" y="259.90" width="3.3" height="3.80" rx="0.5" fill="url(#gb)"/>
<rect x="536.50" y="259.90" width="3.0" height="0.6" fill="#0020f0" opacity="0.7"/>
<rect x="536.50" y="263.10" width="3.0" height="0.6" fill="#0020f0" opacity="0.7"/>
<rect x="542.29" y="260.20" width="1.1" height="34.30" fill="#0000ff" opacity="0.52"/>
<rect x="541.19" y="268.20" width="3.3" height="5.60" rx="0.5" fill="url(#gb)"/>
<rect x="541.34" y="268.20" width="3.0" height="0.6" fill="#0020f0" opacity="0.7"/>
<rect x="541.34" y="273.20" width="3.0" height="0.6" fill="#0020f0" opacity="0.7"/>
<rect x="547.13" y="255.00" width="1.1" height="21.50" fill="#0000ff" opacity="0.52"/>
<rect x="546.03" y="257.40" width="3.3" height="17.80" rx="0.5" fill="url(#gb)"/>
<rect x="546.18" y="257.40" width="3.0" height="0.6" fill="#0020f0" opacity="0.7"/>
<rect x="546.18" y="274.60" width="3.0" height="0.6" fill="#0020f0" opacity="0.7"/>
<rect x="551.97" y="256.20" width="1.1" height="15.30" fill="#ff0000" opacity="0.52"/>
<rect x="550.87" y="256.20" width="3.3" height="14.10" rx="0.5" fill="url(#go)"/>
<rect x="551.02" y="256.20" width="3.0" height="0.6" fill="#f01800" opacity="0.7"/>
<rect x="551.02" y="269.70" width="3.0" height="0.6" fill="#f01800" opacity="0.7"/>
<rect x="556.81" y="265.70" width="1.1" height="17.85" fill="#0000ff" opacity="0.52"/>
<rect x="555.71" y="267.45" width="3.3" height="2.80" rx="0.5" fill="url(#gb)"/>
<rect x="555.86" y="267.45" width="3.0" height="0.6" fill="#0020f0" opacity="0.7"/>
<rect x="555.86" y="269.65" width="3.0" height="0.6" fill="#0020f0" opacity="0.7"/>
<rect x="561.65" y="260.20" width="1.1" height="23.35" fill="#0000ff" opacity="0.52"/>
<rect x="560.55" y="267.20" width="3.3" height="0.9" fill="#0020f0" opacity="0.75"/>
<rect x="566.49" y="257.00" width="1.1" height="44.00" fill="#ff0000" opacity="0.52"/>
<rect x="565.39" y="267.75" width="3.3" height="18.70" rx="0.5" fill="url(#go)"/>
<rect x="565.54" y="267.75" width="3.0" height="0.6" fill="#f01800" opacity="0.7"/>
<rect x="565.54" y="285.85" width="3.0" height="0.6" fill="#f01800" opacity="0.7"/>
<rect x="571.33" y="285.70" width="1.1" height="16.30" fill="#ff0000" opacity="0.52"/>
<rect x="570.23" y="285.70" width="3.3" height="8.80" rx="0.5" fill="url(#go)"/>
<rect x="570.38" y="285.70" width="3.0" height="0.6" fill="#f01800" opacity="0.7"/>
<rect x="570.38" y="293.90" width="3.0" height="0.6" fill="#f01800" opacity="0.7"/>
<rect x="576.17" y="267.00" width="1.1" height="31.90" fill="#0000ff" opacity="0.52"/>
<rect x="575.07" y="268.75" width="3.3" height="26.15" rx="0.5" fill="url(#gb)"/>
<rect x="575.22" y="268.75" width="3.0" height="0.6" fill="#0020f0" opacity="0.7"/>
<rect x="575.22" y="294.30" width="3.0" height="0.6" fill="#0020f0" opacity="0.7"/>
<rect x="581.01" y="252.00" width="1.1" height="19.90" fill="#0000ff" opacity="0.52"/>
<rect x="579.91" y="266.25" width="3.3" height="2.95" rx="0.5" fill="url(#gb)"/>
<rect x="580.06" y="266.25" width="3.0" height="0.6" fill="#0020f0" opacity="0.7"/>
<rect x="580.06" y="268.60" width="3.0" height="0.6" fill="#0020f0" opacity="0.7"/>
<rect x="585.85" y="237.30" width="1.1" height="38.00" fill="#0000ff" opacity="0.52"/>
<rect x="584.75" y="242.40" width="3.3" height="23.95" rx="0.5" fill="url(#gb)"/>
<rect x="584.90" y="242.40" width="3.0" height="0.6" fill="#0020f0" opacity="0.7"/>
<rect x="584.90" y="265.75" width="3.0" height="0.6" fill="#0020f0" opacity="0.7"/>
<rect x="590.69" y="239.50" width="1.1" height="39.30" fill="#ff0000" opacity="0.52"/>
<rect x="589.59" y="242.00" width="3.3" height="26.60" rx="0.5" fill="url(#go)"/>
<rect x="589.74" y="242.00" width="3.0" height="0.6" fill="#f01800" opacity="0.7"/>
<rect x="589.74" y="268.00" width="3.0" height="0.6" fill="#f01800" opacity="0.7"/>
<rect x="595.53" y="238.80" width="1.1" height="35.00" fill="#0000ff" opacity="0.52"/>
<rect x="594.43" y="244.50" width="3.3" height="23.95" rx="0.5" fill="url(#gb)"/>
<rect x="594.58" y="244.50" width="3.0" height="0.6" fill="#0020f0" opacity="0.7"/>
<rect x="594.58" y="267.85" width="3.0" height="0.6" fill="#0020f0" opacity="0.7"/>
<rect x="600.37" y="233.80" width="1.1" height="24.90" fill="#ff0000" opacity="0.52"/>
<rect x="599.27" y="244.50" width="3.3" height="7.10" rx="0.5" fill="url(#go)"/>
<rect x="599.42" y="244.50" width="3.0" height="0.6" fill="#f01800" opacity="0.7"/>
<rect x="599.42" y="251.00" width="3.0" height="0.6" fill="#f01800" opacity="0.7"/>
<rect x="605.21" y="241.10" width="1.1" height="33.70" fill="#ff0000" opacity="0.52"/>
<rect x="604.11" y="251.40" width="3.3" height="21.10" rx="0.5" fill="url(#go)"/>
<rect x="604.26" y="251.40" width="3.0" height="0.6" fill="#f01800" opacity="0.7"/>
<rect x="604.26" y="271.90" width="3.0" height="0.6" fill="#f01800" opacity="0.7"/>
<rect x="610.05" y="264.50" width="1.1" height="22.90" fill="#ff0000" opacity="0.52"/>
<rect x="608.95" y="272.30" width="3.3" height="9.30" rx="0.5" fill="url(#go)"/>
<rect x="609.10" y="272.30" width="3.0" height="0.6" fill="#f01800" opacity="0.7"/>
<rect x="609.10" y="281.00" width="3.0" height="0.6" fill="#f01800" opacity="0.7"/>
<rect x="614.89" y="226.90" width="1.1" height="56.30" fill="#0000ff" opacity="0.52"/>
<rect x="613.79" y="233.60" width="3.3" height="47.50" rx="0.5" fill="url(#gb)"/>
<rect x="613.94" y="233.60" width="3.0" height="0.6" fill="#0020f0" opacity="0.7"/>
<rect x="613.94" y="280.50" width="3.0" height="0.6" fill="#0020f0" opacity="0.7"/>
<rect x="619.73" y="216.30" width="1.1" height="54.40" fill="#ff0000" opacity="0.52"/>
<rect x="618.63" y="233.60" width="3.3" height="34.80" rx="0.5" fill="url(#go)"/>
<rect x="618.78" y="233.60" width="3.0" height="0.6" fill="#f01800" opacity="0.7"/>
<rect x="618.78" y="267.80" width="3.0" height="0.6" fill="#f01800" opacity="0.7"/>
<rect x="624.57" y="221.00" width="1.1" height="52.80" fill="#0000ff" opacity="0.52"/>
<rect x="623.47" y="264.50" width="3.3" height="4.10" rx="0.5" fill="url(#gb)"/>
<rect x="623.62" y="264.50" width="3.0" height="0.6" fill="#0020f0" opacity="0.7"/>
<rect x="623.62" y="268.00" width="3.0" height="0.6" fill="#0020f0" opacity="0.7"/>
<rect x="629.41" y="255.10" width="1.1" height="21.20" fill="#ff0000" opacity="0.52"/>
<rect x="628.31" y="265.25" width="3.3" height="7.25" rx="0.5" fill="url(#go)"/>
<rect x="628.46" y="265.25" width="3.0" height="0.6" fill="#f01800" opacity="0.7"/>
<rect x="628.46" y="271.90" width="3.0" height="0.6" fill="#f01800" opacity="0.7"/>
<rect x="634.25" y="264.85" width="1.1" height="13.95" fill="#0000ff" opacity="0.52"/>
<rect x="633.15" y="270.90" width="3.3" height="2.30" rx="0.5" fill="url(#gb)"/>
<rect x="633.30" y="270.90" width="3.0" height="0.6" fill="#0020f0" opacity="0.7"/>
<rect x="633.30" y="272.60" width="3.0" height="0.6" fill="#0020f0" opacity="0.7"/>
<rect x="639.09" y="259.50" width="1.1" height="17.40" fill="#0000ff" opacity="0.52"/>
<rect x="637.99" y="264.70" width="3.3" height="6.80" rx="0.5" fill="url(#gb)"/>
<rect x="638.14" y="264.70" width="3.0" height="0.6" fill="#0020f0" opacity="0.7"/>
<rect x="638.14" y="270.90" width="3.0" height="0.6" fill="#0020f0" opacity="0.7"/>
<rect x="643.93" y="247.60" width="1.1" height="24.70" fill="#0000ff" opacity="0.52"/>
<rect x="642.83" y="264.70" width="3.3" height="1.20" fill="#0020f0" opacity="0.8"/>
<rect x="643.58" y="265.15" width="1.8" height="0.30" fill="url(#gb)" opacity="0.8"/>
<rect x="648.77" y="245.10" width="1.1" height="21.35" fill="#0000ff" opacity="0.52"/>
<rect x="647.67" y="253.60" width="3.3" height="11.25" rx="0.5" fill="url(#gb)"/>
<rect x="647.82" y="253.60" width="3.0" height="0.6" fill="#0020f0" opacity="0.7"/>
<rect x="647.82" y="264.25" width="3.0" height="0.6" fill="#0020f0" opacity="0.7"/>
<rect x="653.61" y="252.90" width="1.1" height="19.40" fill="#ff0000" opacity="0.52"/>
<rect x="652.51" y="253.60" width="3.3" height="15.00" rx="0.5" fill="url(#go)"/>
<rect x="652.66" y="253.60" width="3.0" height="0.6" fill="#f01800" opacity="0.7"/>
<rect x="652.66" y="268.00" width="3.0" height="0.6" fill="#f01800" opacity="0.7"/>
<rect x="658.45" y="266.20" width="1.1" height="10.40" fill="#0000ff" opacity="0.52"/>
<rect x="657.35" y="267.90" width="3.3" height="8.70" rx="0.5" fill="url(#gb)"/>
<rect x="657.50" y="267.90" width="3.0" height="0.6" fill="#0020f0" opacity="0.7"/>
<rect x="657.50" y="276.00" width="3.0" height="0.6" fill="#0020f0" opacity="0.7"/>
<rect x="663.29" y="258.30" width="1.1" height="10.70" fill="#0000ff" opacity="0.52"/>
<rect x="662.19" y="262.55" width="3.3" height="6.45" rx="0.5" fill="url(#gb)"/>
<rect x="662.34" y="262.55" width="3.0" height="0.6" fill="#0020f0" opacity="0.7"/>
<rect x="662.34" y="268.40" width="3.0" height="0.6" fill="#0020f0" opacity="0.7"/>
<rect x="668.13" y="249.00" width="1.1" height="16.20" fill="#0000ff" opacity="0.52"/>
<rect x="667.03" y="249.90" width="3.3" height="12.85" rx="0.5" fill="url(#gb)"/>
<rect x="667.18" y="249.90" width="3.0" height="0.6" fill="#0020f0" opacity="0.7"/>
<rect x="667.18" y="262.15" width="3.0" height="0.6" fill="#0020f0" opacity="0.7"/>
<rect x="672.97" y="226.10" width="1.1" height="28.40" fill="#0000ff" opacity="0.52"/>
<rect x="671.87" y="232.00" width="3.3" height="18.20" rx="0.5" fill="url(#gb)"/>
<rect x="672.02" y="232.00" width="3.0" height="0.6" fill="#0020f0" opacity="0.7"/>
<rect x="672.02" y="249.60" width="3.0" height="0.6" fill="#0020f0" opacity="0.7"/>
<rect x="677.81" y="228.20" width="1.1" height="14.40" fill="#ff0000" opacity="0.52"/>
<rect x="676.71" y="232.30" width="3.3" height="4.30" rx="0.5" fill="url(#go)"/>
<rect x="676.86" y="232.30" width="3.0" height="0.6" fill="#f01800" opacity="0.7"/>
<rect x="676.86" y="236.00" width="3.0" height="0.6" fill="#f01800" opacity="0.7"/>
<rect x="682.65" y="227.60" width="1.1" height="11.90" fill="#0000ff" opacity="0.52"/>
<rect x="681.55" y="235.30" width="3.3" height="1.70" fill="#0020f0" opacity="0.8"/>
<rect x="682.30" y="235.75" width="1.8" height="0.80" fill="url(#gb)" opacity="0.8"/>
<rect x="687.49" y="232.00" width="1.1" height="8.40" fill="#ff0000" opacity="0.52"/>
<rect x="686.39" y="236.10" width="3.3" height="4.30" rx="0.5" fill="url(#go)"/>
<rect x="686.54" y="236.10" width="3.0" height="0.6" fill="#f01800" opacity="0.7"/>
<rect x="686.54" y="239.80" width="3.0" height="0.6" fill="#f01800" opacity="0.7"/>
<rect x="692.33" y="238.90" width="1.1" height="8.50" fill="#0000ff" opacity="0.52"/>
<rect x="691.23" y="238.90" width="3.3" height="1.50" fill="#0020f0" opacity="0.8"/>
<rect x="691.98" y="239.35" width="1.8" height="0.60" fill="url(#gb)" opacity="0.8"/>
<rect x="697.17" y="230.70" width="1.1" height="10.00" fill="#0000ff" opacity="0.52"/>
<rect x="696.07" y="232.60" width="3.3" height="6.50" rx="0.5" fill="url(#gb)"/>
<rect x="696.22" y="232.60" width="3.0" height="0.6" fill="#0020f0" opacity="0.7"/>
<rect x="696.22" y="238.50" width="3.0" height="0.6" fill="#0020f0" opacity="0.7"/>
<rect x="702.01" y="219.80" width="1.1" height="18.40" fill="#0000ff" opacity="0.52"/>
<rect x="700.91" y="229.40" width="3.3" height="3.80" rx="0.5" fill="url(#gb)"/>
<rect x="701.06" y="229.40" width="3.0" height="0.6" fill="#0020f0" opacity="0.7"/>
<rect x="701.06" y="232.60" width="3.0" height="0.6" fill="#0020f0" opacity="0.7"/>
<rect x="706.85" y="216.90" width="1.1" height="26.70" fill="#0000ff" opacity="0.52"/>
<rect x="705.75" y="227.80" width="3.3" height="2.00" fill="#0020f0" opacity="0.8"/>
<rect x="706.50" y="228.25" width="1.8" height="1.10" fill="url(#gb)" opacity="0.8"/>
<rect x="711.69" y="222.80" width="1.1" height="17.30" fill="#ff0000" opacity="0.52"/>
<rect x="710.59" y="228.20" width="3.3" height="10.00" rx="0.5" fill="url(#go)"/>
<rect x="710.74" y="228.20" width="3.0" height="0.6" fill="#f01800" opacity="0.7"/>
<rect x="710.74" y="237.60" width="3.0" height="0.6" fill="#f01800" opacity="0.7"/>
<rect x="716.53" y="221.50" width="1.1" height="16.40" fill="#0000ff" opacity="0.52"/>
<rect x="715.43" y="232.30" width="3.3" height="5.60" rx="0.5" fill="url(#gb)"/>
<rect x="715.58" y="232.30" width="3.0" height="0.6" fill="#0020f0" opacity="0.7"/>
<rect x="715.58" y="237.30" width="3.0" height="0.6" fill="#0020f0" opacity="0.7"/>
<rect x="721.37" y="226.30" width="1.1" height="24.50" fill="#ff0000" opacity="0.52"/>
<rect x="720.27" y="231.60" width="3.3" height="16.30" rx="0.5" fill="url(#go)"/>
<rect x="720.42" y="231.60" width="3.0" height="0.6" fill="#f01800" opacity="0.7"/>
<rect x="720.42" y="247.30" width="3.0" height="0.6" fill="#f01800" opacity="0.7"/>
<rect x="726.21" y="247.40" width="1.1" height="42.50" fill="#ff0000" opacity="0.52"/>
<rect x="725.11" y="247.40" width="3.3" height="29.20" rx="0.5" fill="url(#go)"/>
<rect x="725.26" y="247.40" width="3.0" height="0.6" fill="#f01800" opacity="0.7"/>
<rect x="725.26" y="276.00" width="3.0" height="0.6" fill="#f01800" opacity="0.7"/>
<rect x="731.05" y="267.60" width="1.1" height="46.00" fill="#ff0000" opacity="0.52"/>
<rect x="729.95" y="276.10" width="3.3" height="31.40" rx="0.5" fill="url(#go)"/>
<rect x="730.10" y="276.10" width="3.0" height="0.6" fill="#f01800" opacity="0.7"/>
<rect x="730.10" y="306.90" width="3.0" height="0.6" fill="#f01800" opacity="0.7"/>
<rect x="735.89" y="291.20" width="1.1" height="41.20" fill="#ff0000" opacity="0.52"/>
<rect x="734.79" y="307.50" width="3.3" height="11.10" rx="0.5" fill="url(#go)"/>
<rect x="734.94" y="307.50" width="3.0" height="0.6" fill="#f01800" opacity="0.7"/>
<rect x="734.94" y="318.00" width="3.0" height="0.6" fill="#f01800" opacity="0.7"/>
<rect x="740.73" y="311.90" width="1.1" height="37.70" fill="#0000ff" opacity="0.52"/>
<rect x="739.63" y="315.30" width="3.3" height="4.20" rx="0.5" fill="url(#gb)"/>
<rect x="739.78" y="315.30" width="3.0" height="0.6" fill="#0020f0" opacity="0.7"/>
<rect x="739.78" y="318.90" width="3.0" height="0.6" fill="#0020f0" opacity="0.7"/>
<rect x="745.57" y="290.40" width="1.1" height="27.20" fill="#0000ff" opacity="0.52"/>
<rect x="744.47" y="296.45" width="3.3" height="18.65" rx="0.5" fill="url(#gb)"/>
<rect x="744.62" y="296.45" width="3.0" height="0.6" fill="#0020f0" opacity="0.7"/>
<rect x="744.62" y="314.50" width="3.0" height="0.6" fill="#0020f0" opacity="0.7"/>
<rect x="750.41" y="287.90" width="1.1" height="20.60" fill="#ff0000" opacity="0.52"/>
<rect x="749.31" y="296.60" width="3.3" height="5.00" rx="0.5" fill="url(#go)"/>
<rect x="749.46" y="296.60" width="3.0" height="0.6" fill="#f01800" opacity="0.7"/>
<rect x="749.46" y="301.00" width="3.0" height="0.6" fill="#f01800" opacity="0.7"/>
<rect x="755.25" y="283.60" width="1.1" height="22.90" fill="#0000ff" opacity="0.52"/>
<rect x="754.15" y="290.20" width="3.3" height="11.40" rx="0.5" fill="url(#gb)"/>
<rect x="754.30" y="290.20" width="3.0" height="0.6" fill="#0020f0" opacity="0.7"/>
<rect x="754.30" y="301.00" width="3.0" height="0.6" fill="#0020f0" opacity="0.7"/>
<rect x="760.09" y="283.60" width="1.1" height="10.30" fill="#0000ff" opacity="0.52"/>
<rect x="758.99" y="285.80" width="3.3" height="5.00" rx="0.5" fill="url(#gb)"/>
<rect x="759.14" y="285.80" width="3.0" height="0.6" fill="#0020f0" opacity="0.7"/>
<rect x="759.14" y="290.20" width="3.0" height="0.6" fill="#0020f0" opacity="0.7"/>
<rect x="764.93" y="272.80" width="1.1" height="14.80" fill="#0000ff" opacity="0.52"/>
<rect x="763.83" y="283.90" width="3.3" height="2.20" rx="0.5" fill="url(#gb)"/>
<rect x="763.98" y="283.90" width="3.0" height="0.6" fill="#0020f0" opacity="0.7"/>
<rect x="763.98" y="285.50" width="3.0" height="0.6" fill="#0020f0" opacity="0.7"/>
<rect x="769.77" y="271.10" width="1.1" height="15.90" fill="#0000ff" opacity="0.52"/>
<rect x="768.67" y="276.60" width="3.3" height="7.00" rx="0.5" fill="url(#gb)"/>
<rect x="768.82" y="276.60" width="3.0" height="0.6" fill="#0020f0" opacity="0.7"/>
<rect x="768.82" y="283.00" width="3.0" height="0.6" fill="#0020f0" opacity="0.7"/>
<rect x="774.61" y="277.00" width="1.1" height="19.60" fill="#0000ff" opacity="0.52"/>
<rect x="773.51" y="285.10" width="3.3" height="1.50" fill="#0020f0" opacity="0.8"/>
<rect x="774.26" y="285.55" width="1.8" height="0.60" fill="url(#gb)" opacity="0.8"/>
<rect x="779.45" y="268.80" width="1.1" height="16.10" fill="#0000ff" opacity="0.52"/>
<rect x="778.35" y="270.70" width="3.3" height="14.20" rx="0.5" fill="url(#gb)"/>
<rect x="778.50" y="270.70" width="3.0" height="0.6" fill="#0020f0" opacity="0.7"/>
<rect x="778.50" y="284.30" width="3.0" height="0.6" fill="#0020f0" opacity="0.7"/>
<rect x="784.29" y="268.80" width="1.1" height="14.10" fill="#ff0000" opacity="0.52"/>
<rect x="783.19" y="271.10" width="3.3" height="6.50" rx="0.5" fill="url(#go)"/>
<rect x="783.34" y="271.10" width="3.0" height="0.6" fill="#f01800" opacity="0.7"/>
<rect x="783.34" y="277.00" width="3.0" height="0.6" fill="#f01800" opacity="0.7"/>
<rect x="789.13" y="274.80" width="1.1" height="57.60" fill="#ff0000" opacity="0.52"/>
<rect x="788.03" y="276.60" width="3.3" height="39.70" rx="0.5" fill="url(#go)"/>
<rect x="788.18" y="276.60" width="3.0" height="0.6" fill="#f01800" opacity="0.7"/>
<rect x="788.18" y="315.70" width="3.0" height="0.6" fill="#f01800" opacity="0.7"/>
<rect x="793.97" y="292.00" width="1.1" height="32.90" fill="#0000ff" opacity="0.52"/>
<rect x="792.87" y="310.10" width="3.3" height="5.60" rx="0.5" fill="url(#gb)"/>
<rect x="793.02" y="310.10" width="3.0" height="0.6" fill="#0020f0" opacity="0.7"/>
<rect x="793.02" y="315.10" width="3.0" height="0.6" fill="#0020f0" opacity="0.7"/>
<rect x="798.81" y="305.50" width="1.1" height="13.10" fill="#ff0000" opacity="0.52"/>
<rect x="797.71" y="309.40" width="3.3" height="7.90" rx="0.5" fill="url(#go)"/>
<rect x="797.86" y="309.40" width="3.0" height="0.6" fill="#f01800" opacity="0.7"/>
<rect x="797.86" y="316.70" width="3.0" height="0.6" fill="#f01800" opacity="0.7"/>
<rect x="803.65" y="297.90" width="1.1" height="19.70" fill="#0000ff" opacity="0.52"/>
<rect x="802.55" y="300.25" width="3.3" height="17.35" rx="0.5" fill="url(#gb)"/>
<rect x="802.70" y="300.25" width="3.0" height="0.6" fill="#0020f0" opacity="0.7"/>
<rect x="802.70" y="317.00" width="3.0" height="0.6" fill="#0020f0" opacity="0.7"/>
<rect x="808.49" y="299.70" width="1.1" height="26.00" fill="#ff0000" opacity="0.52"/>
<rect x="807.39" y="299.70" width="3.3" height="14.10" rx="0.5" fill="url(#go)"/>
<rect x="807.54" y="299.70" width="3.0" height="0.6" fill="#f01800" opacity="0.7"/>
<rect x="807.54" y="313.20" width="3.0" height="0.6" fill="#f01800" opacity="0.7"/>
<rect x="813.33" y="301.25" width="1.1" height="15.35" fill="#0000ff" opacity="0.52"/>
<rect x="812.23" y="305.15" width="3.3" height="9.25" rx="0.5" fill="url(#gb)"/>
<rect x="812.38" y="305.15" width="3.0" height="0.6" fill="#0020f0" opacity="0.7"/>
<rect x="812.38" y="313.80" width="3.0" height="0.6" fill="#0020f0" opacity="0.7"/>
<rect x="818.17" y="306.90" width="1.1" height="43.85" fill="#ff0000" opacity="0.52"/>
<rect x="817.07" y="306.90" width="3.3" height="40.90" rx="0.5" fill="url(#go)"/>
<rect x="817.22" y="306.90" width="3.0" height="0.6" fill="#f01800" opacity="0.7"/>
<rect x="817.22" y="347.20" width="3.0" height="0.6" fill="#f01800" opacity="0.7"/>
<rect x="823.01" y="312.55" width="1.1" height="35.15" fill="#0000ff" opacity="0.52"/>
<rect x="821.91" y="336.65" width="3.3" height="10.95" rx="0.5" fill="url(#gb)"/>
<rect x="822.06" y="336.65" width="3.0" height="0.6" fill="#0020f0" opacity="0.7"/>
<rect x="822.06" y="347.00" width="3.0" height="0.6" fill="#0020f0" opacity="0.7"/>
<rect x="827.85" y="327.40" width="1.1" height="28.90" fill="#ff0000" opacity="0.52"/>
<rect x="826.75" y="336.40" width="3.3" height="9.30" rx="0.5" fill="url(#go)"/>
<rect x="826.90" y="336.40" width="3.0" height="0.6" fill="#f01800" opacity="0.7"/>
<rect x="826.90" y="345.10" width="3.0" height="0.6" fill="#f01800" opacity="0.7"/>
<rect x="832.69" y="318.80" width="1.1" height="28.80" fill="#0000ff" opacity="0.52"/>
<rect x="831.59" y="333.60" width="3.3" height="12.50" rx="0.5" fill="url(#gb)"/>
<rect x="831.74" y="333.60" width="3.0" height="0.6" fill="#0020f0" opacity="0.7"/>
<rect x="831.74" y="345.50" width="3.0" height="0.6" fill="#0020f0" opacity="0.7"/>
<rect x="837.53" y="322.60" width="1.1" height="32.70" fill="#ff0000" opacity="0.52"/>
<rect x="836.43" y="334.90" width="3.3" height="20.35" rx="0.5" fill="url(#go)"/>
<rect x="836.58" y="334.90" width="3.0" height="0.6" fill="#f01800" opacity="0.7"/>
<rect x="836.58" y="354.65" width="3.0" height="0.6" fill="#f01800" opacity="0.7"/>
<rect x="842.37" y="341.25" width="1.1" height="62.85" fill="#ff0000" opacity="0.52"/>
<rect x="841.27" y="354.90" width="3.3" height="40.70" rx="0.5" fill="url(#go)"/>
<rect x="841.42" y="354.90" width="3.0" height="0.6" fill="#f01800" opacity="0.7"/>
<rect x="841.42" y="395.00" width="3.0" height="0.6" fill="#f01800" opacity="0.7"/>
<rect x="847.21" y="383.90" width="1.1" height="22.70" fill="#0000ff" opacity="0.52"/>
<rect x="846.11" y="392.90" width="3.3" height="2.85" rx="0.5" fill="url(#gb)"/>
<rect x="846.26" y="392.90" width="3.0" height="0.6" fill="#0020f0" opacity="0.7"/>
<rect x="846.26" y="395.15" width="3.0" height="0.6" fill="#0020f0" opacity="0.7"/>
<rect x="852.05" y="369.10" width="1.1" height="44.80" fill="#ff0000" opacity="0.52"/>
<rect x="850.95" y="393.60" width="3.3" height="13.70" rx="0.5" fill="url(#go)"/>
<rect x="851.10" y="393.60" width="3.0" height="0.6" fill="#f01800" opacity="0.7"/>
<rect x="851.10" y="406.70" width="3.0" height="0.6" fill="#f01800" opacity="0.7"/>
<rect x="856.89" y="387.20" width="1.1" height="41.70" fill="#0000ff" opacity="0.52"/>
<rect x="855.79" y="392.35" width="3.3" height="14.95" rx="0.5" fill="url(#gb)"/>
<rect x="855.94" y="392.35" width="3.0" height="0.6" fill="#0020f0" opacity="0.7"/>
<rect x="855.94" y="406.70" width="3.0" height="0.6" fill="#0020f0" opacity="0.7"/>
<rect x="861.73" y="378.90" width="1.1" height="23.90" fill="#ff0000" opacity="0.52"/>
<rect x="860.63" y="392.20" width="3.3" height="4.10" rx="0.5" fill="url(#go)"/>
<rect x="860.78" y="392.20" width="3.0" height="0.6" fill="#f01800" opacity="0.7"/>
<rect x="860.78" y="395.70" width="3.0" height="0.6" fill="#f01800" opacity="0.7"/>
<rect x="866.57" y="377.60" width="1.1" height="29.00" fill="#0000ff" opacity="0.52"/>
<rect x="865.47" y="389.85" width="3.3" height="6.45" rx="0.5" fill="url(#gb)"/>
<rect x="865.62" y="389.85" width="3.0" height="0.6" fill="#0020f0" opacity="0.7"/>
<rect x="865.62" y="395.70" width="3.0" height="0.6" fill="#0020f0" opacity="0.7"/>
<rect x="871.41" y="375.10" width="1.1" height="16.20" fill="#0000ff" opacity="0.52"/>
<rect x="870.31" y="380.20" width="3.3" height="10.05" rx="0.5" fill="url(#gb)"/>
<rect x="870.46" y="380.20" width="3.0" height="0.6" fill="#0020f0" opacity="0.7"/>
<rect x="870.46" y="389.65" width="3.0" height="0.6" fill="#0020f0" opacity="0.7"/>
<rect x="876.25" y="372.90" width="1.1" height="13.10" fill="#ff0000" opacity="0.52"/>
<rect x="875.15" y="379.90" width="3.3" height="6.00" rx="0.5" fill="url(#go)"/>
<rect x="875.30" y="379.90" width="3.0" height="0.6" fill="#f01800" opacity="0.7"/>
<rect x="875.30" y="385.30" width="3.0" height="0.6" fill="#f01800" opacity="0.7"/>
<rect x="881.09" y="385.20" width="1.1" height="20.80" fill="#ff0000" opacity="0.52"/>
<rect x="879.99" y="385.20" width="3.3" height="19.60" rx="0.5" fill="url(#go)"/>
<rect x="880.14" y="385.20" width="3.0" height="0.6" fill="#f01800" opacity="0.7"/>
<rect x="880.14" y="404.20" width="3.0" height="0.6" fill="#f01800" opacity="0.7"/>
<rect x="885.93" y="404.00" width="1.1" height="20.50" fill="#ff0000" opacity="0.52"/>
<rect x="884.83" y="404.00" width="3.3" height="15.10" rx="0.5" fill="url(#go)"/>
<rect x="884.98" y="404.00" width="3.0" height="0.6" fill="#f01800" opacity="0.7"/>
<rect x="884.98" y="418.50" width="3.0" height="0.6" fill="#f01800" opacity="0.7"/>
<rect x="0" y="0.9" width="997.9" height="1.25" fill="#9a9a9a"/>
<rect x="0" y="1" width="1.05" height="440" fill="#a4a4a4"/>
<rect x="995.9" y="2.1" width="2" height="439.9" fill="#fff" opacity="0.37"/>
<rect x="0" y="440" width="995.9" height="2" fill="#fff" opacity="0.37"/>
<rect x="0" y="453" width="1024" height="1" fill="#9a9a9a"/>
<rect x="0" y="24.5" width="1.05" height="19.5" fill="#ecc4ac"/>
<path d="M793.8 1.6 L800 1.6 L796.9 4.9 Z" fill="#8596a8"/>
<text x="3.10" y="8.50" font-size="6.8" fill="#dedede" textLength="32.3" lengthAdjust="spacingAndGlyphs">GBPUSD,H1</text>
<text x="39.60" y="8.50" font-size="6.8" fill="#dedede" textLength="19.2" lengthAdjust="spacingAndGlyphs">1.34977</text>
<text x="61.00" y="8.50" font-size="6.8" fill="#dedede" textLength="19.6" lengthAdjust="spacingAndGlyphs">1.34980</text>
<text x="82.80" y="8.50" font-size="6.8" fill="#dedede" textLength="19.7" lengthAdjust="spacingAndGlyphs">1.34847</text>
<text x="104.50" y="8.50" font-size="6.8" fill="#dedede" textLength="19.2" lengthAdjust="spacingAndGlyphs">1.34881</text>
<rect x="997.3" y="15.50" width="1.2" height="1.2" fill="#b0b0b0"/>
<text x="1000.60" y="18.45" font-size="6.8" fill="#dedede" textLength="19.8" lengthAdjust="spacingAndGlyphs">1.37510</text>
<rect x="997.3" y="35.66" width="1.2" height="1.2" fill="#b0b0b0"/>
<text x="1000.60" y="38.61" font-size="6.8" fill="#dedede" textLength="19.8" lengthAdjust="spacingAndGlyphs">1.37375</text>
<rect x="997.3" y="55.82" width="1.2" height="1.2" fill="#b0b0b0"/>
<text x="1000.60" y="58.77" font-size="6.8" fill="#dedede" textLength="19.8" lengthAdjust="spacingAndGlyphs">1.37245</text>
<rect x="997.3" y="75.98" width="1.2" height="1.2" fill="#b0b0b0"/>
<text x="1000.60" y="78.93" font-size="6.8" fill="#dedede" textLength="19.8" lengthAdjust="spacingAndGlyphs">1.37115</text>
<rect x="997.3" y="96.14" width="1.2" height="1.2" fill="#b0b0b0"/>
<text x="1000.60" y="99.09" font-size="6.8" fill="#dedede" textLength="19.8" lengthAdjust="spacingAndGlyphs">1.36980</text>
<rect x="997.3" y="116.30" width="1.2" height="1.2" fill="#b0b0b0"/>
<text x="1000.60" y="119.25" font-size="6.8" fill="#dedede" textLength="19.8" lengthAdjust="spacingAndGlyphs">1.36850</text>
<rect x="997.3" y="136.46" width="1.2" height="1.2" fill="#b0b0b0"/>
<text x="1000.60" y="139.41" font-size="6.8" fill="#dedede" textLength="19.8" lengthAdjust="spacingAndGlyphs">1.36720</text>
<rect x="997.3" y="156.62" width="1.2" height="1.2" fill="#b0b0b0"/>
<text x="1000.60" y="159.57" font-size="6.8" fill="#dedede" textLength="19.8" lengthAdjust="spacingAndGlyphs">1.36585</text>
<rect x="997.3" y="176.78" width="1.2" height="1.2" fill="#b0b0b0"/>
<text x="1000.60" y="179.73" font-size="6.8" fill="#dedede" textLength="19.8" lengthAdjust="spacingAndGlyphs">1.36455</text>
<rect x="997.3" y="196.94" width="1.2" height="1.2" fill="#b0b0b0"/>
<text x="1000.60" y="199.89" font-size="6.8" fill="#dedede" textLength="19.8" lengthAdjust="spacingAndGlyphs">1.36325</text>
<rect x="997.3" y="217.10" width="1.2" height="1.2" fill="#b0b0b0"/>
<text x="1000.60" y="220.05" font-size="6.8" fill="#dedede" textLength="19.8" lengthAdjust="spacingAndGlyphs">1.36190</text>
<rect x="997.3" y="237.26" width="1.2" height="1.2" fill="#b0b0b0"/>
<text x="1000.60" y="240.21" font-size="6.8" fill="#dedede" textLength="19.8" lengthAdjust="spacingAndGlyphs">1.36060</text>
<rect x="997.3" y="257.42" width="1.2" height="1.2" fill="#b0b0b0"/>
<text x="1000.60" y="260.37" font-size="6.8" fill="#dedede" textLength="19.8" lengthAdjust="spacingAndGlyphs">1.35930</text>
<rect x="997.3" y="277.58" width="1.2" height="1.2" fill="#b0b0b0"/>
<text x="1000.60" y="280.53" font-size="6.8" fill="#dedede" textLength="19.8" lengthAdjust="spacingAndGlyphs">1.35795</text>
<rect x="997.3" y="297.74" width="1.2" height="1.2" fill="#b0b0b0"/>
<text x="1000.60" y="300.69" font-size="6.8" fill="#dedede" textLength="19.8" lengthAdjust="spacingAndGlyphs">1.35665</text>
<rect x="997.3" y="317.90" width="1.2" height="1.2" fill="#b0b0b0"/>
<text x="1000.60" y="320.85" font-size="6.8" fill="#dedede" textLength="19.8" lengthAdjust="spacingAndGlyphs">1.35535</text>
<rect x="997.3" y="338.06" width="1.2" height="1.2" fill="#b0b0b0"/>
<text x="1000.60" y="341.01" font-size="6.8" fill="#dedede" textLength="19.8" lengthAdjust="spacingAndGlyphs">1.35400</text>
<rect x="997.3" y="358.22" width="1.2" height="1.2" fill="#b0b0b0"/>
<text x="1000.60" y="361.17" font-size="6.8" fill="#dedede" textLength="19.8" lengthAdjust="spacingAndGlyphs">1.35270</text>
<rect x="997.3" y="378.38" width="1.2" height="1.2" fill="#b0b0b0"/>
<text x="1000.60" y="381.33" font-size="6.8" fill="#dedede" textLength="19.8" lengthAdjust="spacingAndGlyphs">1.35140</text>
<rect x="997.3" y="398.54" width="1.2" height="1.2" fill="#b0b0b0"/>
<text x="1000.60" y="401.49" font-size="6.8" fill="#dedede" textLength="19.8" lengthAdjust="spacingAndGlyphs">1.35010</text>
<rect x="997.8" y="415.9" width="25" height="6.9" fill="#fff"/>
<text x="1000.60" y="421.55" font-size="6.8" fill="#000" textLength="19.8" lengthAdjust="spacingAndGlyphs">1.34881</text>
<rect x="997.3" y="438.86" width="1.2" height="1.2" fill="#b0b0b0"/>
<text x="1000.60" y="441.81" font-size="6.8" fill="#dedede" textLength="19.8" lengthAdjust="spacingAndGlyphs">1.34750</text>
<rect x="0.16" y="440.3" width="1.2" height="2.7" fill="#d8d8d8"/>
<text x="0.36" y="449.20" font-size="6.8" fill="#dedede" textLength="25.4" lengthAdjust="spacingAndGlyphs">2 Jul 2025</text>
<rect x="38.88" y="440.3" width="1.2" height="2.7" fill="#d8d8d8"/>
<text x="39.08" y="449.20" font-size="6.8" fill="#dedede" textLength="26.4" lengthAdjust="spacingAndGlyphs">2 Jul 14:00</text>
<rect x="77.60" y="440.3" width="1.2" height="2.7" fill="#d8d8d8"/>
<text x="77.80" y="449.20" font-size="6.8" fill="#dedede" textLength="26.4" lengthAdjust="spacingAndGlyphs">2 Jul 22:00</text>
<rect x="116.32" y="440.3" width="1.2" height="2.7" fill="#d8d8d8"/>
<text x="116.52" y="449.20" font-size="6.8" fill="#dedede" textLength="26.4" lengthAdjust="spacingAndGlyphs">3 Jul 06:00</text>
<rect x="155.04" y="440.3" width="1.2" height="2.7" fill="#d8d8d8"/>
<text x="155.24" y="449.20" font-size="6.8" fill="#dedede" textLength="26.4" lengthAdjust="spacingAndGlyphs">3 Jul 14:00</text>
<rect x="193.76" y="440.3" width="1.2" height="2.7" fill="#d8d8d8"/>
<text x="193.96" y="449.20" font-size="6.8" fill="#dedede" textLength="26.4" lengthAdjust="spacingAndGlyphs">3 Jul 22:00</text>
<rect x="232.48" y="440.3" width="1.2" height="2.7" fill="#d8d8d8"/>
<text x="232.68" y="449.20" font-size="6.8" fill="#dedede" textLength="26.4" lengthAdjust="spacingAndGlyphs">4 Jul 06:00</text>
<rect x="271.20" y="440.3" width="1.2" height="2.7" fill="#d8d8d8"/>
<text x="271.40" y="449.20" font-size="6.8" fill="#dedede" textLength="26.4" lengthAdjust="spacingAndGlyphs">4 Jul 14:00</text>
<rect x="309.92" y="440.3" width="1.2" height="2.7" fill="#d8d8d8"/>
<text x="310.12" y="449.20" font-size="6.8" fill="#dedede" textLength="26.4" lengthAdjust="spacingAndGlyphs">6 Jul 22:00</text>
<rect x="348.64" y="440.3" width="1.2" height="2.7" fill="#d8d8d8"/>
<text x="348.84" y="449.20" font-size="6.8" fill="#dedede" textLength="26.4" lengthAdjust="spacingAndGlyphs">7 Jul 06:00</text>
<rect x="387.36" y="440.3" width="1.2" height="2.7" fill="#d8d8d8"/>
<text x="387.56" y="449.20" font-size="6.8" fill="#dedede" textLength="26.4" lengthAdjust="spacingAndGlyphs">7 Jul 14:00</text>
<rect x="426.08" y="440.3" width="1.2" height="2.7" fill="#d8d8d8"/>
<text x="426.28" y="449.20" font-size="6.8" fill="#dedede" textLength="26.4" lengthAdjust="spacingAndGlyphs">7 Jul 22:00</text>
<rect x="464.80" y="440.3" width="1.2" height="2.7" fill="#d8d8d8"/>
<text x="465.00" y="449.20" font-size="6.8" fill="#dedede" textLength="26.4" lengthAdjust="spacingAndGlyphs">8 Jul 06:00</text>
<rect x="503.52" y="440.3" width="1.2" height="2.7" fill="#d8d8d8"/>
<text x="503.72" y="449.20" font-size="6.8" fill="#dedede" textLength="26.4" lengthAdjust="spacingAndGlyphs">8 Jul 14:00</text>
<rect x="542.24" y="440.3" width="1.2" height="2.7" fill="#d8d8d8"/>
<text x="542.44" y="449.20" font-size="6.8" fill="#dedede" textLength="26.4" lengthAdjust="spacingAndGlyphs">8 Jul 22:00</text>
<rect x="580.96" y="440.3" width="1.2" height="2.7" fill="#d8d8d8"/>
<text x="581.16" y="449.20" font-size="6.8" fill="#dedede" textLength="26.4" lengthAdjust="spacingAndGlyphs">9 Jul 06:00</text>
<rect x="619.68" y="440.3" width="1.2" height="2.7" fill="#d8d8d8"/>
<text x="619.88" y="449.20" font-size="6.8" fill="#dedede" textLength="26.4" lengthAdjust="spacingAndGlyphs">9 Jul 14:00</text>
<rect x="658.40" y="440.3" width="1.2" height="2.7" fill="#d8d8d8"/>
<text x="658.60" y="449.20" font-size="6.8" fill="#dedede" textLength="26.4" lengthAdjust="spacingAndGlyphs">9 Jul 22:00</text>
<rect x="697.12" y="440.3" width="1.2" height="2.7" fill="#d8d8d8"/>
<text x="697.32" y="449.20" font-size="6.8" fill="#dedede" textLength="29.6" lengthAdjust="spacingAndGlyphs">10 Jul 06:00</text>
<rect x="735.84" y="440.3" width="1.2" height="2.7" fill="#d8d8d8"/>
<text x="736.04" y="449.20" font-size="6.8" fill="#dedede" textLength="29.6" lengthAdjust="spacingAndGlyphs">10 Jul 14:00</text>
<rect x="774.56" y="440.3" width="1.2" height="2.7" fill="#d8d8d8"/>
<text x="774.76" y="449.20" font-size="6.8" fill="#dedede" textLength="29.6" lengthAdjust="spacingAndGlyphs">10 Jul 22:00</text>
<rect x="813.28" y="440.3" width="1.2" height="2.7" fill="#d8d8d8"/>
<text x="813.48" y="449.20" font-size="6.8" fill="#dedede" textLength="29.6" lengthAdjust="spacingAndGlyphs">11 Jul 06:00</text>
<rect x="852.00" y="440.3" width="1.2" height="2.7" fill="#d8d8d8"/>
<text x="852.20" y="449.20" font-size="6.8" fill="#dedede" textLength="29.6" lengthAdjust="spacingAndGlyphs">11 Jul 14:00</text>
<g opacity="0.996">
<rect x="560" y="155" width="260" height="23.3" fill="url(#sh)"/>
<rect x="567.4" y="13.9" width="244.6" height="142.2" rx="4.5" ry="4.5" fill="#f1f1f1"/>
<rect x="572.3" y="18.3" width="8.4" height="6.2" fill="#fff" stroke="#5b8de0" stroke-width="0.8"/>
<path d="M573.8 20 v2.4 h1.6" stroke="#555" stroke-width="0.5" fill="none"/>
<rect x="576.2" y="20.3" width="5.9" height="6.6" rx="1.2" fill="#efc62e"/>
<text x="578.1" y="25.6" font-size="5" font-style="italic" font-weight="bold" fill="#5a4a10">f</text>
<text x="585.00" y="25.30" font-size="7.3" fill="#8e8e8e" textLength="81.0" lengthAdjust="spacingAndGlyphs">Indicators on GBPUSD,H1</text>
<text x="769.60" y="25.70" font-size="8.8" fill="#8e8e8e" textLength="3.4" lengthAdjust="spacingAndGlyphs">?</text>
<path d="M795.2 19.8 L801.3 25.5 M801.3 19.8 L795.2 25.5" stroke="#8a8a8a" stroke-width="0.7" fill="none"/>
<rect x="572.3" y="37.1" width="173.3" height="112.5" fill="#fff" stroke="#9a9da0" stroke-width="0.9"/>
<rect x="578.5" y="42" width="4.7" height="4.6" fill="#fff" stroke="#a6a6a6" stroke-width="0.8"/>
<rect x="579.5" y="43.95" width="2.7" height="0.75" fill="#4a78c4"/>
<path d="M583.8 44.35 H588 M593.25 49.3 V55.6 H599.8" stroke="#b8b8b8" stroke-width="0.7" fill="none"/>
<rect x="588.8" y="39.6" width="9.1" height="7.9" rx="0.6" fill="#fff" stroke="#6f9fee" stroke-width="0.8"/>
<rect x="588.4" y="39.0" width="9.9" height="2.8" rx="0.5" fill="#1c5ed8"/>
<rect x="595.6" y="39.7" width="1.8" height="0.7" fill="#6f9ff0"/>
<path d="M590.1 43.2 V46.4" stroke="#c0c8d8" stroke-width="0.5" fill="none"/>
<path d="M590.7 43.4 C591.5 43.4 591.7 46.3 592.7 46.3 S593.9 43.4 594.9 43.4 S596 46.3 597 46.3" stroke="#6f7f9c" stroke-width="0.8" fill="none"/>
<text x="601.30" y="45.90" font-size="7" fill="#000" textLength="30.2" lengthAdjust="spacingAndGlyphs">Main chart</text>
<rect x="601.8" y="50.1" width="8.2" height="8.8" rx="1.4" fill="#e2b62a"/>
<rect x="602.8" y="51.1" width="6.2" height="6.8" rx="0.8" fill="#f0d060"/>
<rect x="603.2" y="51.6" width="5.4" height="0.7" fill="#f8ecb0"/>
<rect x="603.2" y="57.0" width="3.4" height="0.7" fill="#f8ecb0"/>
<text x="604.2" y="57.1" font-size="6.2" font-style="italic" font-weight="bold" fill="#4a3a08">f</text>
<circle cx="608.5" cy="56.9" r="1.45" fill="#f0d060" stroke="#9a7408" stroke-width="0.75"/>
<text x="614.10" y="56.80" font-size="7" fill="#000" textLength="52.8" lengthAdjust="spacingAndGlyphs">i-CassierWorkTime</text>
<rect x="751.7" y="37.8" width="55.3" height="11.8" rx="1.8" fill="#f6f6f6" stroke="#e4e4e4" stroke-width="0.7"/>
<text x="773.10" y="46.65" font-size="7" fill="#989898" textLength="10.9" lengthAdjust="spacingAndGlyphs">Edit</text>
<rect x="751.7" y="55.0" width="55.3" height="11.8" rx="1.8" fill="#f6f6f6" stroke="#e4e4e4" stroke-width="0.7"/>
<text x="769.60" y="63.85" font-size="7" fill="#989898" textLength="18.6" lengthAdjust="spacingAndGlyphs">Delete</text>
<rect x="751.7" y="137.1" width="55.3" height="11.9" rx="1.8" fill="#fdfdfd" stroke="#d2d2d2" stroke-width="0.7"/>
<text x="770.90" y="146.00" font-size="7" fill="#000" textLength="15.7" lengthAdjust="spacingAndGlyphs">Close</text>
</g>
</svg></body></html>
